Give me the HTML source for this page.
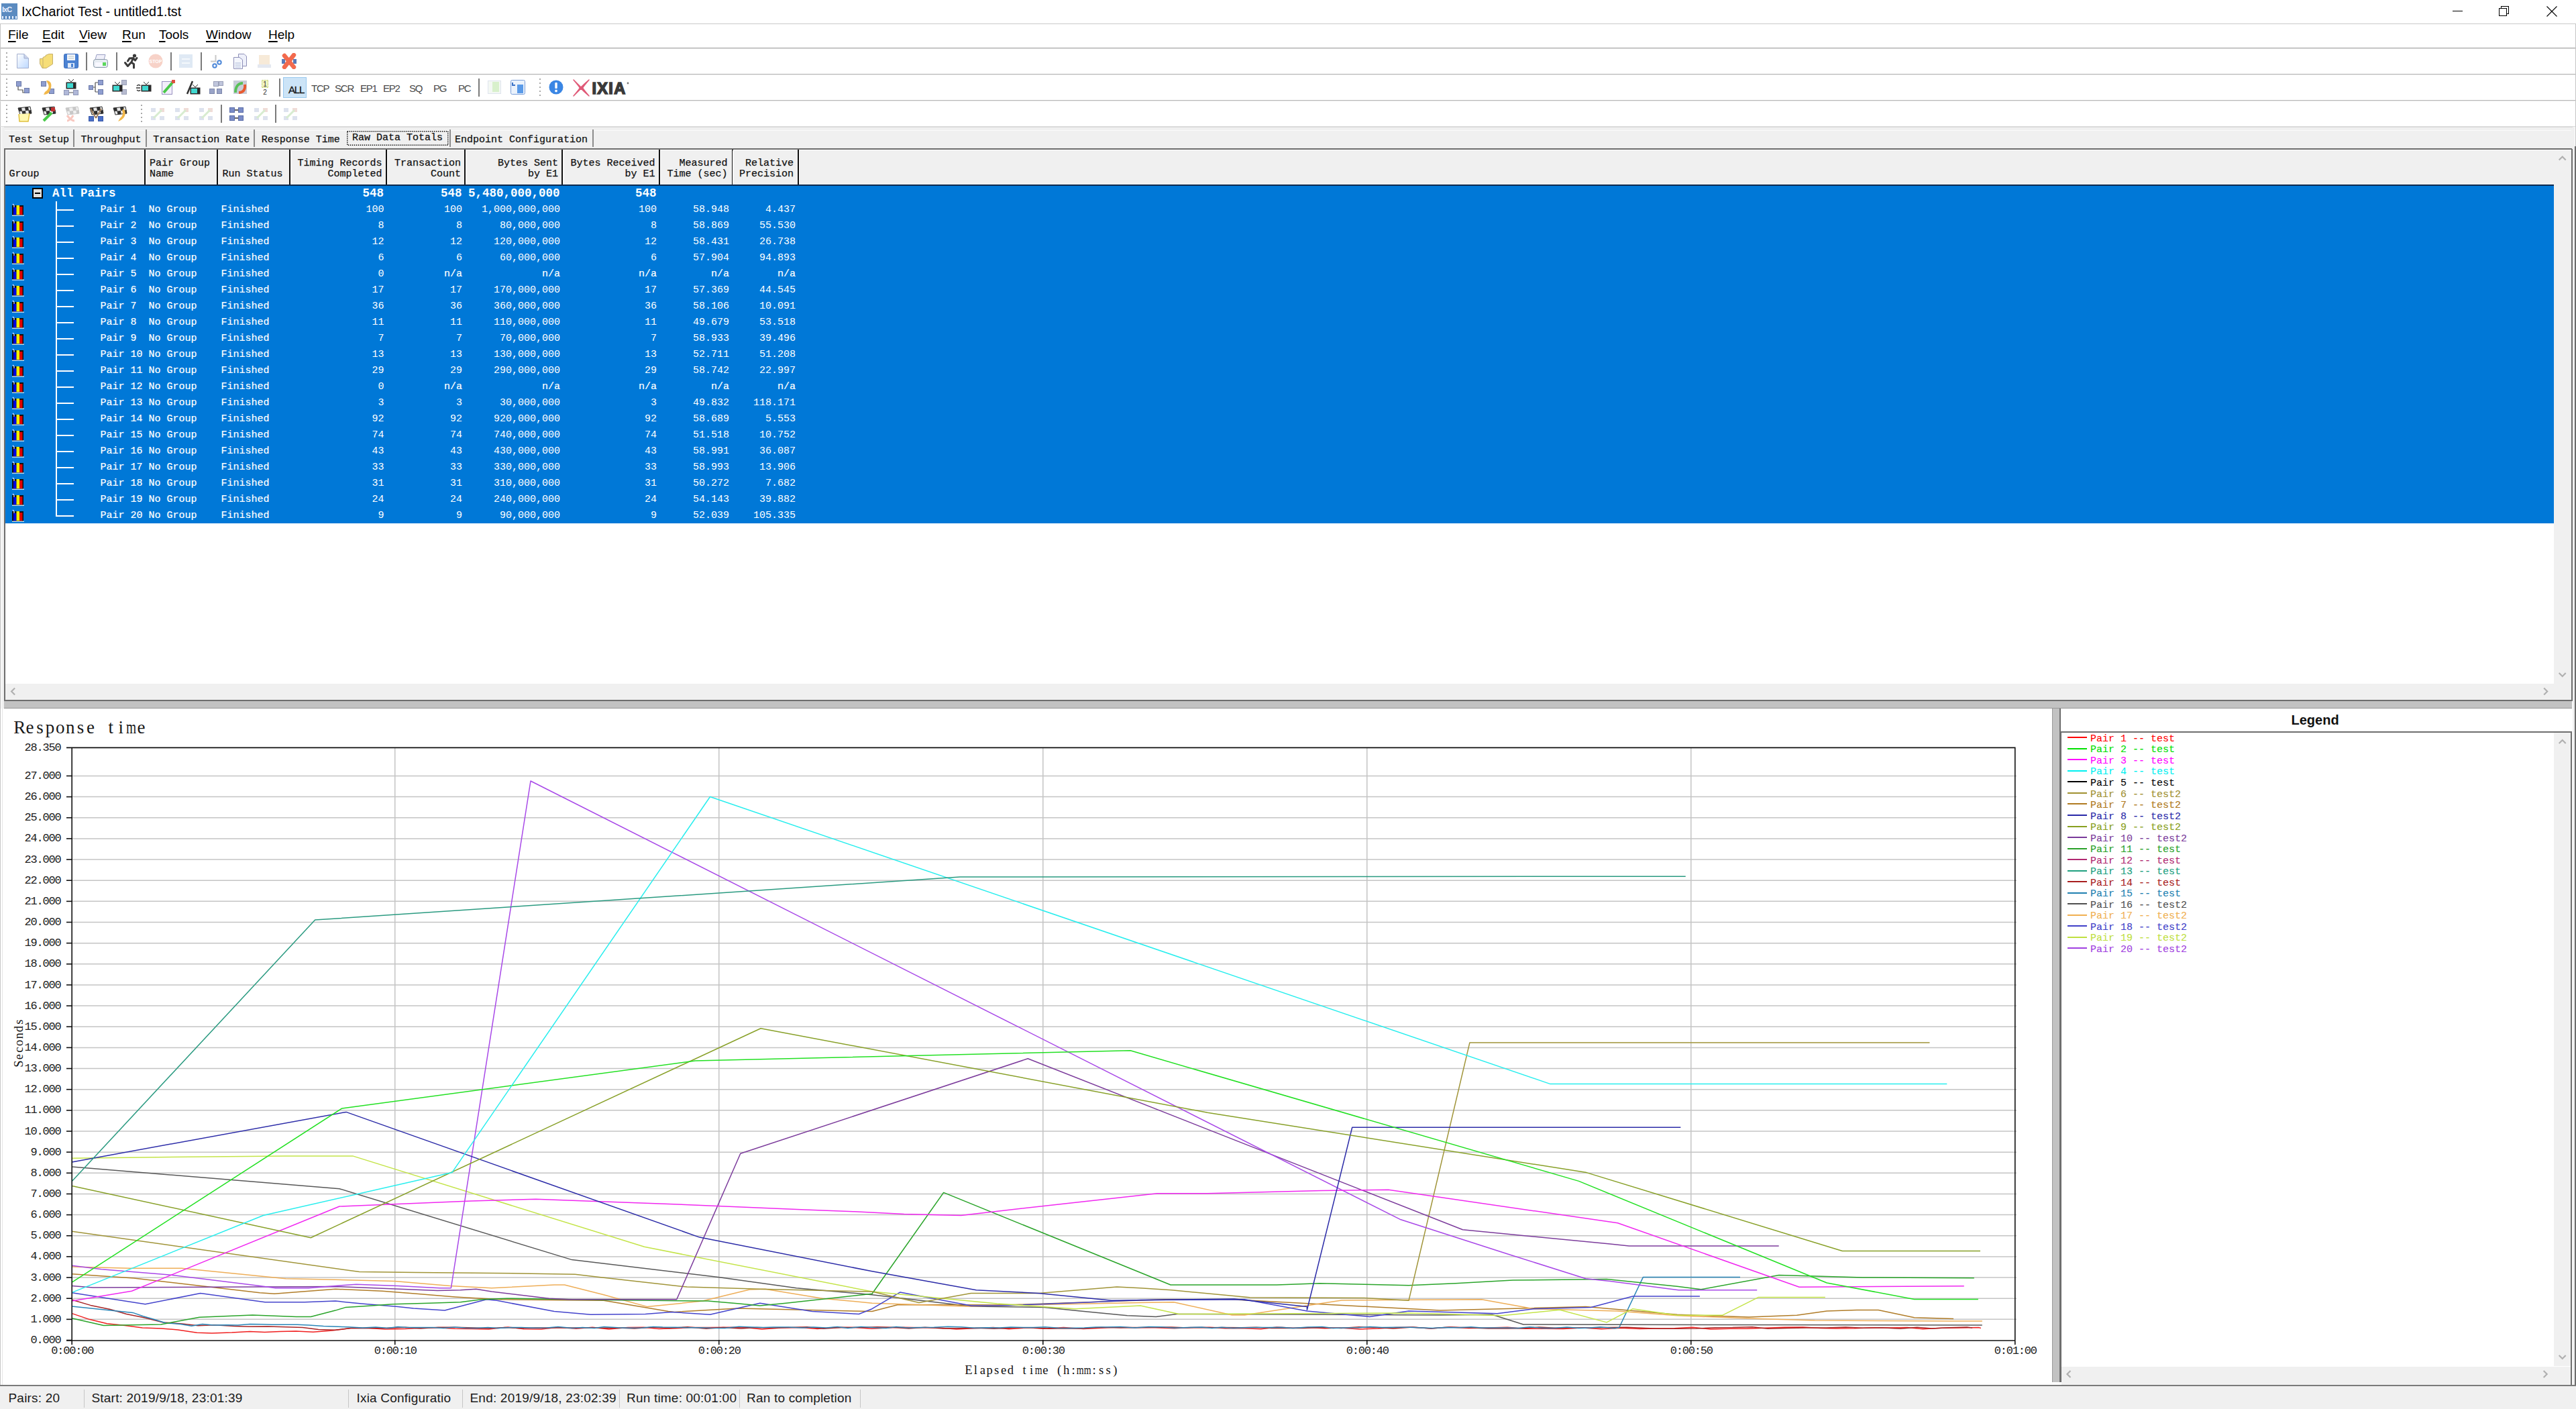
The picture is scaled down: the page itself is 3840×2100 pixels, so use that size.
<!DOCTYPE html><html><head><meta charset="utf-8"><title>IxChariot Test</title><style>

*{margin:0;padding:0;box-sizing:border-box}
html,body{width:3840px;height:2100px;overflow:hidden;background:#fff}
body{position:relative;font-family:"Liberation Sans",sans-serif;color:#000}
.a{position:absolute}
.t{position:absolute;white-space:pre;line-height:1}
.mono{font-family:"Liberation Mono",monospace}
.mb{font-family:"Liberation Mono",monospace;font-weight:bold}

</style></head><body>
<div class="a" style="left:2px;top:5px;width:24px;height:24px;background:#5b8bc0"></div>
<div class="t" style="left:3px;top:8px;font:bold 11px 'Liberation Sans', sans-serif;color:#e8f0ff;letter-spacing:-1px">IxC</div>
<div class="a" style="left:3px;top:24px;width:22px;height:4px;background:repeating-linear-gradient(90deg,#e8f0ff 0 2px,#5b8bc0 2px 5px)"></div>
<div class="t" style="left:32px;top:6px;font:19.7px 'Liberation Sans', sans-serif;color:#000">IxChariot Test - untitled1.tst</div>
<div class="a" style="left:3656px;top:16px;width:15px;height:1px;background:#000"></div>
<div class="a" style="left:3728px;top:9px;width:12px;height:12px;border:1px solid #000"></div>
<div class="a" style="left:3725px;top:12px;width:12px;height:12px;border:1px solid #000;background:#fff"></div>
<svg class="a" style="left:3795px;top:8px" width="18" height="18"><path d="M1.5 1.5L16.5 16.5M16.5 1.5L1.5 16.5" stroke="#000" stroke-width="1.1"/></svg>
<div class="a" style="left:0px;top:35px;width:3840px;height:1px;background:#c9c9c9"></div>
<div class="t" style="left:12px;top:41px;font:19px 'Liberation Sans', sans-serif"><u style="text-decoration-thickness:2px;text-underline-offset:3px">F</u>ile</div>
<div class="t" style="left:63px;top:41px;font:19px 'Liberation Sans', sans-serif"><u style="text-decoration-thickness:2px;text-underline-offset:3px">E</u>dit</div>
<div class="t" style="left:118px;top:41px;font:19px 'Liberation Sans', sans-serif"><u style="text-decoration-thickness:2px;text-underline-offset:3px">V</u>iew</div>
<div class="t" style="left:182px;top:41px;font:19px 'Liberation Sans', sans-serif"><u style="text-decoration-thickness:2px;text-underline-offset:3px">R</u>un</div>
<div class="t" style="left:237px;top:41px;font:19px 'Liberation Sans', sans-serif"><u style="text-decoration-thickness:2px;text-underline-offset:3px">T</u>ools</div>
<div class="t" style="left:307px;top:41px;font:19px 'Liberation Sans', sans-serif"><u style="text-decoration-thickness:2px;text-underline-offset:3px">W</u>indow</div>
<div class="t" style="left:400px;top:41px;font:19px 'Liberation Sans', sans-serif"><u style="text-decoration-thickness:2px;text-underline-offset:3px">H</u>elp</div>
<div class="a" style="left:0px;top:71px;width:3840px;height:1px;background:#a9a9a9"></div>
<div class="a" style="left:0px;top:72px;width:3840px;height:1px;background:#e3e3e3"></div>
<div class="a" style="left:0px;top:35px;width:1px;height:2065px;background:#c6c6c6"></div>
<div class="a" style="left:0px;top:110px;width:3840px;height:1px;background:#b9b9b9"></div>
<div class="a" style="left:0px;top:111px;width:3840px;height:1px;background:#e8e8e8"></div>
<div class="a" style="left:0px;top:149px;width:3840px;height:1px;background:#b9b9b9"></div>
<div class="a" style="left:0px;top:150px;width:3840px;height:1px;background:#e8e8e8"></div>
<div class="a" style="left:0px;top:188px;width:3840px;height:1px;background:#dcdcdc"></div>
<div class="a" style="left:8.5px;top:78px;width:2px;height:30px;background:repeating-linear-gradient(180deg,#a8a8a8 0 2px,transparent 2px 6px)"></div>
<div class="a" style="left:8.5px;top:117px;width:2px;height:30px;background:repeating-linear-gradient(180deg,#a8a8a8 0 2px,transparent 2px 6px)"></div>
<div class="a" style="left:8.5px;top:156px;width:2px;height:30px;background:repeating-linear-gradient(180deg,#a8a8a8 0 2px,transparent 2px 6px)"></div>
<div class="a" style="left:209.5px;top:156px;width:2px;height:30px;background:repeating-linear-gradient(180deg,#a8a8a8 0 2px,transparent 2px 6px)"></div>
<div class="a" style="left:803.5px;top:117px;width:2px;height:30px;background:repeating-linear-gradient(180deg,#a8a8a8 0 2px,transparent 2px 6px)"></div>
<div class="a" style="left:128px;top:78px;width:2px;height:27px;background:#7a7a7a"></div>
<div class="a" style="left:173px;top:78px;width:2px;height:27px;background:#7a7a7a"></div>
<div class="a" style="left:254px;top:78px;width:2px;height:27px;background:#7a7a7a"></div>
<div class="a" style="left:299px;top:78px;width:2px;height:27px;background:#7a7a7a"></div>
<div class="a" style="left:416px;top:117px;width:2px;height:27px;background:#7a7a7a"></div>
<div class="a" style="left:713px;top:117px;width:2px;height:27px;background:#7a7a7a"></div>
<div class="a" style="left:329px;top:156px;width:2px;height:27px;background:#7a7a7a"></div>
<div class="a" style="left:410px;top:156px;width:2px;height:27px;background:#7a7a7a"></div>
<svg class="a" style="left:22px;top:79px;opacity:1.0" width="24" height="24" viewBox="0 0 24 24"><defs><linearGradient id="gd" x1="0" y1="0" x2="1" y2="1"><stop offset="0" stop-color="#fff"/><stop offset="1" stop-color="#bcd8ff"/></linearGradient></defs><path d="M3.5 1.5H14L20.5 8V22.5H3.5Z" fill="url(#gd)" stroke="#a3afcf"/><path d="M14 1.5V8H20.5" fill="#c8d2ea" stroke="#a3afcf"/></svg>
<svg class="a" style="left:58px;top:79px;opacity:1.0" width="24" height="24" viewBox="0 0 24 24"><path d="M1.5 8.5H6V6.5L10 5V3.5L15 1.5H20.5V16.5L11 22.5H5L1.5 16Z" fill="#f6de78" stroke="#c6b06a"/><path d="M6 8.5V22" stroke="#c6b06a" fill="none"/></svg>
<svg class="a" style="left:94px;top:79px;opacity:1.0" width="24" height="24" viewBox="0 0 24 24"><rect x="1.5" y="1.5" width="21" height="21" rx="2" fill="#4b82d2" stroke="#3b6cbc"/><rect x="6" y="2" width="12" height="9" fill="#f4f6fa"/><path d="M8 5H16M8 8H16" stroke="#b8c4c0"/><rect x="7" y="15" width="10" height="7" fill="#dfeaf8"/><rect x="12" y="16" width="3" height="5" fill="#4b82d2"/></svg>
<svg class="a" style="left:138px;top:79px;opacity:1.0" width="24" height="24" viewBox="0 0 24 24"><path d="M6 2.5H19L17 10H4Z" fill="#f0f0fa" stroke="#9aa0c4"/><rect x="1.5" y="9.5" width="21" height="12" rx="3" fill="#e6ecf2" stroke="#8a98a8"/><rect x="4" y="14" width="11" height="6" fill="#f8f8ff"/><rect x="15" y="14" width="5" height="5" fill="#5cd85c"/></svg>
<svg class="a" style="left:184px;top:79px;opacity:1.0" width="24" height="24" viewBox="0 0 24 24"><circle cx="16.5" cy="4" r="2.6" fill="#3a3a3a"/><path d="M2.5 14.5L6.5 19.5L12 13.5M12 13.5L14.5 7.5M14.5 7.5L9 8L6.5 12M14.5 7.5L17.5 11L20 7.5M12.5 14.5L15.5 16.5L15.5 22" stroke="#3a3a3a" stroke-width="3" fill="none" stroke-linejoin="round" stroke-linecap="round"/></svg>
<svg class="a" style="left:220px;top:79px;opacity:1.0" width="24" height="24" viewBox="0 0 24 24"><circle cx="12" cy="12" r="10.5" fill="#f7d2c8"/><text x="12" y="15" font-size="7" font-family="Liberation Sans" font-weight="bold" text-anchor="middle" fill="#fff">STOP</text></svg>
<svg class="a" style="left:265px;top:79px;opacity:1.0" width="24" height="24" viewBox="0 0 24 24"><rect x="2" y="2" width="20" height="20" fill="#dfe9f4"/><path d="M6 9H18M6 15H18" stroke="#f4f8fc" stroke-width="2"/></svg>
<svg class="a" style="left:310px;top:79px;opacity:1.0" width="24" height="24" viewBox="0 0 24 24"><path d="M4 12.5H11.5V3" stroke="#c8c8c8" stroke-width="2" fill="none"/><circle cx="10" cy="19" r="2.7" fill="none" stroke="#4e88d8" stroke-width="2"/><circle cx="17" cy="14" r="2.7" fill="none" stroke="#4e88d8" stroke-width="2"/></svg>
<svg class="a" style="left:346px;top:79px;opacity:1.0" width="24" height="24" viewBox="0 0 24 24"><path d="M9.5 1.5H18L21.5 5V19.5H9.5Z" fill="#eef0fa" stroke="#8e90b8"/><path d="M2.5 6.5H11L15.5 10V23.5H2.5Z" fill="#f4f6fc" stroke="#8e90b8"/><path d="M4.5 15H13M4.5 18H13M4.5 21H13" stroke="#aab8d8"/></svg>
<svg class="a" style="left:382px;top:79px;opacity:1.0" width="24" height="24" viewBox="0 0 24 24"><rect x="4" y="3" width="16" height="19" fill="#f7ead8"/><rect x="2" y="17" width="20" height="5" fill="#e4e8f0"/></svg>
<svg class="a" style="left:419px;top:79px;opacity:1.0" width="24" height="24" viewBox="0 0 24 24"><rect x="1" y="9" width="5" height="7" fill="#5a7ab8"/><rect x="18" y="9" width="5" height="7" fill="#5a7ab8"/><path d="M5 4L19 21M19 3L5 21" stroke="#f26a4e" stroke-width="6.5" stroke-linecap="round"/></svg>
<svg class="a" style="left:22px;top:118px;opacity:1.0" width="24" height="24" viewBox="0 0 24 24"><rect x="2.5" y="3.5" width="7" height="7" fill="#8f9ed0" stroke="#6c7aa8"/><rect x="14.5" y="13.5" width="7" height="7" fill="#8f9ed0" stroke="#6c7aa8"/><path d="M5 11V16H12V20H14" stroke="#505050" fill="none" stroke-width="1.2"/></svg>
<svg class="a" style="left:59px;top:118px;opacity:1.0" width="24" height="24" viewBox="0 0 24 24"><rect x="2.5" y="3.5" width="7" height="7" fill="#8f9ed0" stroke="#6c7aa8"/><rect x="14.5" y="14.5" width="7" height="7" fill="#8f9ed0" stroke="#6c7aa8"/><path d="M10 2C18 2 20 10 14 20C11 23 6 23 6 23L8 19C12 17 15 12 13 8Z" fill="#f2b84a"/></svg>
<svg class="a" style="left:94px;top:118px;opacity:1.0" width="24" height="24" viewBox="0 0 24 24"><path d="M8 0L12 4L16 0" stroke="#303030" fill="none"/><rect x="4.5" y="4.5" width="15" height="10" fill="#2a2a2a"/><rect x="6" y="6" width="9" height="7" fill="#40d8d0"/><rect x="1.5" y="16.5" width="7" height="7" fill="#b0b8d8" stroke="#9098b8"/><rect x="15.5" y="16.5" width="7" height="7" fill="#b0b8d8" stroke="#9098b8"/><path d="M9 20H15" stroke="#505050"/></svg>
<svg class="a" style="left:131px;top:118px;opacity:1.0" width="24" height="24" viewBox="0 0 24 24"><rect x="1.5" y="9.5" width="6" height="6" fill="#8f9ed0" stroke="#6c7aa8"/><rect x="15.5" y="1.5" width="7" height="7" fill="#8f9ed0" stroke="#6c7aa8"/><rect x="15.5" y="15.5" width="7" height="7" fill="#8f9ed0" stroke="#6c7aa8"/><path d="M8 12H11M11 5V19M11 5H15M11 19H15" stroke="#505050" fill="none" stroke-width="1.2"/></svg>
<svg class="a" style="left:166px;top:118px;opacity:1.0" width="24" height="24" viewBox="0 0 24 24"><rect x="15.5" y="1.5" width="7" height="7" fill="#b8bcd0" stroke="#9aa0b8"/><rect x="15.5" y="15.5" width="7" height="7" fill="#b8bcd0" stroke="#9aa0b8"/><path d="M5 4L9 8L13 4" stroke="#303030" fill="none"/><rect x="1.5" y="8.5" width="15" height="10" fill="#2a2a2a"/><rect x="3" y="10" width="9" height="7" fill="#40d8d0"/></svg>
<svg class="a" style="left:202px;top:118px;opacity:1.0" width="24" height="24" viewBox="0 0 24 24"><path d="M12 4L16 8L20 4" stroke="#303030" fill="none"/><rect x="8.5" y="8.5" width="15" height="10" fill="#2a2a2a"/><rect x="10" y="10" width="9" height="7" fill="#40d8d0"/><path d="M2 10C4 8 6 8 7 10M1 13H7M2 16C4 18 6 18 7 16" stroke="#303030" fill="none" stroke-width="1.3"/></svg>
<svg class="a" style="left:238px;top:118px;opacity:1.0" width="24" height="24" viewBox="0 0 24 24"><rect x="3.5" y="3.5" width="15" height="19" fill="#f2eefa" stroke="#9890c0"/><path d="M6 20L20 4" stroke="#48c848" stroke-width="4"/><rect x="18" y="1" width="5" height="5" fill="#e05040"/></svg>
<svg class="a" style="left:275px;top:118px;opacity:1.0" width="24" height="24" viewBox="0 0 24 24"><path d="M4 22L12 3" stroke="#303030" stroke-width="2.5"/><path d="M12 8L16 12L20 8" stroke="#303030" fill="none"/><rect x="8.5" y="12.5" width="15" height="10" fill="#2a2a2a"/><rect x="10" y="14" width="9" height="7" fill="#40d8d0"/></svg>
<svg class="a" style="left:310px;top:118px;opacity:1.0" width="24" height="24" viewBox="0 0 24 24"><rect x="2.5" y="14.5" width="7" height="7" fill="#9aa4c8" stroke="#7c86aa"/><rect x="13.5" y="14.5" width="7" height="7" fill="#9aa4c8" stroke="#7c86aa"/><rect x="8.5" y="3.5" width="7" height="7" fill="#c0c6dc" stroke="#9aa0b8"/><rect x="16.5" y="3.5" width="6" height="6" fill="#c0c6dc" stroke="#9aa0b8"/></svg>
<svg class="a" style="left:346px;top:118px;opacity:1.0" width="24" height="24" viewBox="0 0 24 24"><rect x="2" y="2" width="20" height="20" fill="#c8ccd8"/><path d="M5 20C5 10 10 6 16 6" stroke="#58c058" stroke-width="4" fill="none"/><path d="M19 8C20 16 16 20 10 20" stroke="#e85a30" stroke-width="4" fill="none"/></svg>
<svg class="a" style="left:383px;top:118px;opacity:1.0" width="24" height="24" viewBox="0 0 24 24"><rect x="7.5" y="1.5" width="9" height="11" fill="#f2f6c0" stroke="#b8c860" stroke-dasharray="1.5 1"/><text x="12" y="11" font-size="10" font-family="Liberation Sans" text-anchor="middle" fill="#303030">1</text><text x="12" y="23" font-size="10" font-family="Liberation Sans" text-anchor="middle" fill="#303030">2</text></svg>
<div class="a" style="left:422px;top:115px;width:35px;height:31px;background:#cce4f7;border:1px solid #99c9ef"></div>
<div class="t" style="left:430px;top:124.5px;font:15px 'Liberation Sans', sans-serif;color:#111;letter-spacing:-1.2px;-webkit-text-stroke:0.3px #111">ALL</div>
<div class="t" style="left:464px;top:123px;font:15px 'Liberation Sans', sans-serif;color:#4a4a4a;letter-spacing:-1.2px">TCP</div>
<div class="t" style="left:499px;top:123px;font:15px 'Liberation Sans', sans-serif;color:#4a4a4a;letter-spacing:-1.2px">SCR</div>
<div class="t" style="left:537px;top:123px;font:15px 'Liberation Sans', sans-serif;color:#4a4a4a;letter-spacing:-1.2px">EP1</div>
<div class="t" style="left:571px;top:123px;font:15px 'Liberation Sans', sans-serif;color:#4a4a4a;letter-spacing:-1.2px">EP2</div>
<div class="t" style="left:610px;top:123px;font:15px 'Liberation Sans', sans-serif;color:#4a4a4a;letter-spacing:-1.2px">SQ</div>
<div class="t" style="left:646px;top:123px;font:15px 'Liberation Sans', sans-serif;color:#4a4a4a;letter-spacing:-1.2px">PG</div>
<div class="t" style="left:683px;top:123px;font:15px 'Liberation Sans', sans-serif;color:#4a4a4a;letter-spacing:-1.2px">PC</div>
<svg class="a" style="left:725px;top:118px;opacity:1.0" width="24" height="24" viewBox="0 0 24 24"><rect x="2.5" y="2.5" width="19" height="19" fill="#f4f8f4" stroke="#dfe4ee"/><rect x="9" y="4" width="10" height="15" fill="#d8f0cc"/></svg>
<svg class="a" style="left:760px;top:118px;opacity:1.0" width="24" height="24" viewBox="0 0 24 24"><rect x="1.5" y="1.5" width="21" height="21" rx="2" fill="#eaf2fc" stroke="#7a9ed8"/><path d="M4 5V9H8" stroke="#3a72c8" stroke-width="2" fill="none"/><rect x="11" y="8" width="9" height="13" fill="#5a9ae8"/></svg>
<svg class="a" style="left:817px;top:118px;opacity:1.0" width="24" height="24" viewBox="0 0 24 24"><circle cx="12" cy="12" r="10.5" fill="#3a86e4"/><rect x="10.3" y="5" width="3.4" height="9" rx="1" fill="#fff"/><rect x="10.3" y="15.8" width="3.4" height="3.4" rx="1" fill="#fff"/></svg>
<svg class="a" style="left:854px;top:118px" width="84" height="26" viewBox="0 0 84 26"><path d="M1 1C6 6 9 9 12 12C15 9 18 6 24 1C20 6 17 9 14.5 13C17 17 20 20 24 25C18 20 15 17 12 14C9 17 6 20 1 25C5 20 8 17 10.5 13C8 9 5 6 1 1Z" fill="#e05a78" stroke="#e05a78" stroke-width="1.5" stroke-linejoin="round"/><text x="28.5" y="21.5" font-family="Liberation Sans" font-weight="bold" font-size="23.5" fill="#3a3a3a" stroke="#3a3a3a" stroke-width="1.6" letter-spacing="1.3">IXIA</text><circle cx="82" cy="6" r="1.4" fill="#777"/></svg>
<svg class="a" style="left:24px;top:158px;opacity:1.0" width="24" height="24" viewBox="0 0 24 24"><path d="M3 3L21 1L23 11L6 13Z" fill="#e8e8e8" stroke="#303030"/><path d="M3 3L8 2.5L9 7.5L4.5 8ZM13 2L18 1.5L19 6.5L14 7ZM8.5 7.5L14 7L14.5 12L9.5 12.5ZM18.5 6.5L22.5 6L23 11L19 11.5Z" fill="#303030"/><path d="M4 12L5 23H18L20 11" fill="#fff8b0" stroke="#e0c040" stroke-width="1.5"/></svg>
<svg class="a" style="left:60px;top:158px;opacity:1.0" width="24" height="24" viewBox="0 0 24 24"><path d="M3 3L21 1L23 11L6 13Z" fill="#e8e8e8" stroke="#303030"/><path d="M3 3L8 2.5L9 7.5L4.5 8ZM13 2L18 1.5L19 6.5L14 7ZM8.5 7.5L14 7L14.5 12L9.5 12.5ZM18.5 6.5L22.5 6L23 11L19 11.5Z" fill="#303030"/><rect x="16" y="2" width="6" height="6" fill="#c03030"/><path d="M5 22L17 10" stroke="#48c848" stroke-width="4"/></svg>
<svg class="a" style="left:95px;top:158px;opacity:1.0" width="24" height="24" viewBox="0 0 24 24"><path d="M3 3L21 1L23 11L6 13Z" fill="#f0f0f0" stroke="#c8c8c8"/><path d="M3 3L8 2.5L9 7.5L4.5 8ZM13 2L18 1.5L19 6.5L14 7ZM8.5 7.5L14 7L14.5 12L9.5 12.5ZM18.5 6.5L22.5 6L23 11L19 11.5Z" fill="#c8c8c8"/><path d="M5 14C8 18 12 22 16 22M14 14C12 18 8 22 5 22" stroke="#f8c8c0" stroke-width="3" fill="none"/></svg>
<svg class="a" style="left:131px;top:158px;opacity:1.0" width="24" height="24" viewBox="0 0 24 24"><path d="M3 3L21 1L23 11L6 13Z" fill="#e8e8e8" stroke="#303030"/><path d="M3 3L8 2.5L9 7.5L4.5 8ZM13 2L18 1.5L19 6.5L14 7ZM8.5 7.5L14 7L14.5 12L9.5 12.5ZM18.5 6.5L22.5 6L23 11L19 11.5Z" fill="#303030"/><path d="M4 4L12 18M20 4L12 18" stroke="#a08060" stroke-width="2"/><rect x="1.5" y="15.5" width="7" height="7" fill="#4a70c8" stroke="#3858a8"/><rect x="15.5" y="15.5" width="7" height="7" fill="#4a70c8" stroke="#3858a8"/></svg>
<svg class="a" style="left:166px;top:158px;opacity:1.0" width="24" height="24" viewBox="0 0 24 24"><path d="M3 3L21 1L23 11L6 13Z" fill="#e8e8e8" stroke="#303030"/><path d="M3 3L8 2.5L9 7.5L4.5 8ZM13 2L18 1.5L19 6.5L14 7ZM8.5 7.5L14 7L14.5 12L9.5 12.5ZM18.5 6.5L22.5 6L23 11L19 11.5Z" fill="#303030"/><path d="M18 4C24 10 20 20 10 23L13 18C17 15 18 10 16 7Z" fill="#f2b84a"/></svg>
<svg class="a" style="left:223px;top:158px;opacity:1.0" width="24" height="24" viewBox="0 0 24 24"><rect x="2" y="3" width="7" height="6" fill="#dde2ee"/><rect x="15" y="3" width="7" height="6" fill="#f0dcd8"/><rect x="2" y="15" width="7" height="6" fill="#dde2ee"/><rect x="15" y="15" width="7" height="6" fill="#dde2ee"/><path d="M6 18L18 6" stroke="#d8ecd0" stroke-width="3"/></svg>
<svg class="a" style="left:259px;top:158px;opacity:1.0" width="24" height="24" viewBox="0 0 24 24"><rect x="2" y="3" width="7" height="6" fill="#dde2ee"/><rect x="15" y="3" width="7" height="6" fill="#f0dcd8"/><rect x="2" y="15" width="7" height="6" fill="#dde2ee"/><rect x="15" y="15" width="7" height="6" fill="#dde2ee"/><path d="M6 18L18 6" stroke="#d8ecd0" stroke-width="3"/></svg>
<svg class="a" style="left:295px;top:158px;opacity:1.0" width="24" height="24" viewBox="0 0 24 24"><rect x="2" y="3" width="7" height="6" fill="#dde2ee"/><rect x="15" y="3" width="7" height="6" fill="#f0dcd8"/><rect x="2" y="15" width="7" height="6" fill="#dde2ee"/><rect x="15" y="15" width="7" height="6" fill="#dde2ee"/><path d="M6 18L18 6" stroke="#d8ecd0" stroke-width="3"/></svg>
<svg class="a" style="left:377px;top:158px;opacity:1.0" width="24" height="24" viewBox="0 0 24 24"><rect x="2" y="3" width="7" height="6" fill="#dde2ee"/><rect x="15" y="3" width="7" height="6" fill="#f0dcd8"/><rect x="2" y="15" width="7" height="6" fill="#dde2ee"/><rect x="15" y="15" width="7" height="6" fill="#dde2ee"/><path d="M6 18L18 6" stroke="#d8ecd0" stroke-width="3"/></svg>
<svg class="a" style="left:421px;top:158px;opacity:1.0" width="24" height="24" viewBox="0 0 24 24"><rect x="2" y="3" width="7" height="6" fill="#dde2ee"/><rect x="15" y="3" width="7" height="6" fill="#f0dcd8"/><rect x="2" y="15" width="7" height="6" fill="#dde2ee"/><rect x="15" y="15" width="7" height="6" fill="#dde2ee"/><path d="M6 18L18 6" stroke="#d8ecd0" stroke-width="3"/></svg>
<svg class="a" style="left:340px;top:158px;opacity:1.0" width="24" height="24" viewBox="0 0 24 24"><rect x="2.5" y="2.5" width="7" height="7" fill="#7a8cc8" stroke="#5a6ca8"/><rect x="15.5" y="2.5" width="7" height="7" fill="#7a8cc8" stroke="#5a6ca8"/><rect x="2.5" y="14.5" width="7" height="7" fill="#7a8cc8" stroke="#5a6ca8"/><rect x="15.5" y="14.5" width="7" height="7" fill="#7a8cc8" stroke="#5a6ca8"/><path d="M10 6H15M10 18H15" stroke="#303030" stroke-width="1.5"/></svg>
<div class="a" style="left:1px;top:189px;width:3837px;height:33px;background:#f0f0f0"></div>
<div class="a" style="left:1px;top:189px;width:3837px;height:1px;background:#d9d9d9"></div>
<div class="a" style="left:7px;top:194px;width:3826px;height:1px;background:#fafafa"></div>
<div class="a" style="left:1px;top:189px;width:5px;height:1875px;background:#f0f0f0"></div>
<div class="a" style="left:2px;top:189px;width:1px;height:1875px;background:#fbfbfb"></div>
<div class="t" style="left:13.0px;top:199.5px;font:15px 'Liberation Mono', monospace;color:#111;-webkit-text-stroke:0.25px #111">Test Setup</div>
<div class="t" style="left:120.5px;top:199.5px;font:15px 'Liberation Mono', monospace;color:#111;-webkit-text-stroke:0.25px #111">Throughput</div>
<div class="t" style="left:228.2px;top:199.5px;font:15px 'Liberation Mono', monospace;color:#111;-webkit-text-stroke:0.25px #111">Transaction Rate</div>
<div class="t" style="left:389.7px;top:199.5px;font:15px 'Liberation Mono', monospace;color:#111;-webkit-text-stroke:0.25px #111">Response Time</div>
<div class="t" style="left:525.1px;top:197px;font:15px 'Liberation Mono', monospace;color:#111;-webkit-text-stroke:0.25px #111">Raw Data Totals</div>
<div class="t" style="left:678.1px;top:199.5px;font:15px 'Liberation Mono', monospace;color:#111;-webkit-text-stroke:0.25px #111">Endpoint Configuration</div>
<div class="a" style="left:109px;top:193px;width:2px;height:26px;background:#8c8c8c"></div>
<div class="a" style="left:217px;top:193px;width:2px;height:26px;background:#8c8c8c"></div>
<div class="a" style="left:378px;top:193px;width:2px;height:26px;background:#8c8c8c"></div>
<div class="a" style="left:670px;top:193px;width:2px;height:26px;background:#8c8c8c"></div>
<div class="a" style="left:883px;top:193px;width:2px;height:26px;background:#8c8c8c"></div>
<svg class="a" style="left:517px;top:195px" width="152" height="23"><rect x="0.75" y="0.75" width="150" height="20.5" fill="none" stroke="#000" stroke-width="1.4" stroke-dasharray="1.4 1.6"/></svg>
<div class="a" style="left:6px;top:222px;width:3828px;height:823px;background:#fff"></div>
<div class="a" style="left:8px;top:223px;width:3799px;height:53px;background:#f0f0f0"></div>
<div class="a" style="left:8px;top:223px;width:3799px;height:1px;background:#fff"></div>
<div class="a" style="left:6px;top:221px;width:3828px;height:2px;background:#6e6e6e"></div>
<div class="a" style="left:6px;top:222px;width:2px;height:823px;background:#6e6e6e"></div>
<div class="a" style="left:6px;top:1043px;width:3828px;height:2px;background:#6e6e6e"></div>
<div class="a" style="left:3833px;top:222px;width:2px;height:823px;background:#6e6e6e"></div>
<div class="a" style="left:8px;top:224px;width:1px;height:52px;background:#fff"></div>
<div class="a" style="left:215px;top:223px;width:2px;height:53px;background:#111"></div>
<div class="a" style="left:218px;top:224px;width:1px;height:52px;background:#fff"></div>
<div class="a" style="left:323px;top:223px;width:2px;height:53px;background:#111"></div>
<div class="a" style="left:325px;top:224px;width:1px;height:52px;background:#fff"></div>
<div class="a" style="left:431px;top:223px;width:2px;height:53px;background:#111"></div>
<div class="a" style="left:434px;top:224px;width:1px;height:52px;background:#fff"></div>
<div class="a" style="left:575px;top:223px;width:2px;height:53px;background:#111"></div>
<div class="a" style="left:577px;top:224px;width:1px;height:52px;background:#fff"></div>
<div class="a" style="left:692px;top:223px;width:2px;height:53px;background:#111"></div>
<div class="a" style="left:694px;top:224px;width:1px;height:52px;background:#fff"></div>
<div class="a" style="left:837px;top:223px;width:2px;height:53px;background:#111"></div>
<div class="a" style="left:840px;top:224px;width:1px;height:52px;background:#fff"></div>
<div class="a" style="left:982px;top:223px;width:2px;height:53px;background:#111"></div>
<div class="a" style="left:984px;top:224px;width:1px;height:52px;background:#fff"></div>
<div class="a" style="left:1091px;top:223px;width:2px;height:53px;background:#111"></div>
<div class="a" style="left:1092px;top:224px;width:1px;height:52px;background:#fff"></div>
<div class="a" style="left:1189px;top:223px;width:2px;height:53px;background:#111"></div>
<div class="a" style="left:1191px;top:224px;width:1px;height:52px;background:#fff"></div>
<div class="a" style="left:8px;top:275px;width:3799px;height:2px;background:#0a2a50"></div>
<div class="a" style="left:8px;top:277px;width:3799px;height:503px;background:#0078d7"></div>
<div class="t" style="left:13.5px;top:250.5px;font:15px 'Liberation Mono', monospace;color:#111;-webkit-text-stroke:0.25px #111">Group</div>
<div class="t" style="left:223.1px;top:234.5px;font:15px 'Liberation Mono', monospace;color:#111;-webkit-text-stroke:0.25px #111">Pair Group</div>
<div class="t" style="left:223.1px;top:250.5px;font:15px 'Liberation Mono', monospace;color:#111;-webkit-text-stroke:0.25px #111">Name</div>
<div class="t" style="left:331.5px;top:250.5px;font:15px 'Liberation Mono', monospace;color:#111;-webkit-text-stroke:0.25px #111">Run Status</div>
<div class="t" style="right:3270.5px;top:234.5px;font:15px 'Liberation Mono', monospace;color:#111;-webkit-text-stroke:0.25px #111">Timing Records</div>
<div class="t" style="right:3270.5px;top:250.5px;font:15px 'Liberation Mono', monospace;color:#111;-webkit-text-stroke:0.25px #111">Completed</div>
<div class="t" style="right:3153px;top:234.5px;font:15px 'Liberation Mono', monospace;color:#111;-webkit-text-stroke:0.25px #111">Transaction</div>
<div class="t" style="right:3153px;top:250.5px;font:15px 'Liberation Mono', monospace;color:#111;-webkit-text-stroke:0.25px #111">Count</div>
<div class="t" style="right:3008px;top:234.5px;font:15px 'Liberation Mono', monospace;color:#111;-webkit-text-stroke:0.25px #111">Bytes Sent</div>
<div class="t" style="right:3008px;top:250.5px;font:15px 'Liberation Mono', monospace;color:#111;-webkit-text-stroke:0.25px #111">by E1</div>
<div class="t" style="right:2863.5px;top:234.5px;font:15px 'Liberation Mono', monospace;color:#111;-webkit-text-stroke:0.25px #111">Bytes Received</div>
<div class="t" style="right:2863.5px;top:250.5px;font:15px 'Liberation Mono', monospace;color:#111;-webkit-text-stroke:0.25px #111">by E1</div>
<div class="t" style="right:2755.5px;top:234.5px;font:15px 'Liberation Mono', monospace;color:#111;-webkit-text-stroke:0.25px #111">Measured</div>
<div class="t" style="right:2755.5px;top:250.5px;font:15px 'Liberation Mono', monospace;color:#111;-webkit-text-stroke:0.25px #111">Time (sec)</div>
<div class="t" style="right:2657px;top:234.5px;font:15px 'Liberation Mono', monospace;color:#111;-webkit-text-stroke:0.25px #111">Relative</div>
<div class="t" style="right:2657px;top:250.5px;font:15px 'Liberation Mono', monospace;color:#111;-webkit-text-stroke:0.25px #111">Precision</div>
<div class="t" style="left:78px;top:278.0px;font:bold 17.5px 'Liberation Mono', monospace;color:#fff">All Pairs</div>
<div class="t" style="right:3268.0px;top:278.0px;font:bold 17.5px 'Liberation Mono', monospace;color:#fff">548</div>
<div class="t" style="right:3151.5px;top:278.0px;font:bold 17.5px 'Liberation Mono', monospace;color:#fff">548</div>
<div class="t" style="right:3005.5px;top:278.0px;font:bold 17.5px 'Liberation Mono', monospace;color:#fff">5,480,000,000</div>
<div class="t" style="right:2861.5px;top:278.0px;font:bold 17.5px 'Liberation Mono', monospace;color:#fff">548</div>
<div class="t" style="left:149.5px;top:303.5px;font:15px 'Liberation Mono', monospace;color:#fff;-webkit-text-stroke:0.2px #fff">Pair 1</div>
<div class="t" style="left:221.5px;top:303.5px;font:15px 'Liberation Mono', monospace;color:#fff;-webkit-text-stroke:0.2px #fff">No Group</div>
<div class="t" style="left:329.5px;top:303.5px;font:15px 'Liberation Mono', monospace;color:#fff;-webkit-text-stroke:0.2px #fff">Finished</div>
<div class="t" style="right:3267.5px;top:303.5px;font:15px 'Liberation Mono', monospace;color:#fff">100</div>
<div class="t" style="right:3151px;top:303.5px;font:15px 'Liberation Mono', monospace;color:#fff">100</div>
<div class="t" style="right:3005px;top:303.5px;font:15px 'Liberation Mono', monospace;color:#fff">1,000,000,000</div>
<div class="t" style="right:2861px;top:303.5px;font:15px 'Liberation Mono', monospace;color:#fff">100</div>
<div class="t" style="right:2753px;top:303.5px;font:15px 'Liberation Mono', monospace;color:#fff">58.948</div>
<div class="t" style="right:2654px;top:303.5px;font:15px 'Liberation Mono', monospace;color:#fff">4.437</div>
<svg class="a" style="left:17px;top:303px" width="20" height="20" viewBox="0 0 20 20"><rect x="1" y="3" width="17" height="16" fill="#111"/><rect x="3" y="6" width="4.5" height="11" fill="#0000e0"/><rect x="7.5" y="3" width="4.5" height="14" fill="#f0f000"/><rect x="12" y="5" width="4.5" height="12" fill="#e00000"/><rect x="1" y="17.5" width="18" height="1.5" fill="#c0d8f0"/><path d="M2 1L4 3V6" stroke="#e0e0ff" stroke-width="1.2" fill="none"/></svg>
<div class="a" style="left:83px;top:312px;width:27px;height:2px;background:#fff"></div>
<div class="t" style="left:149.5px;top:327.5px;font:15px 'Liberation Mono', monospace;color:#fff;-webkit-text-stroke:0.2px #fff">Pair 2</div>
<div class="t" style="left:221.5px;top:327.5px;font:15px 'Liberation Mono', monospace;color:#fff;-webkit-text-stroke:0.2px #fff">No Group</div>
<div class="t" style="left:329.5px;top:327.5px;font:15px 'Liberation Mono', monospace;color:#fff;-webkit-text-stroke:0.2px #fff">Finished</div>
<div class="t" style="right:3267.5px;top:327.5px;font:15px 'Liberation Mono', monospace;color:#fff">8</div>
<div class="t" style="right:3151px;top:327.5px;font:15px 'Liberation Mono', monospace;color:#fff">8</div>
<div class="t" style="right:3005px;top:327.5px;font:15px 'Liberation Mono', monospace;color:#fff">80,000,000</div>
<div class="t" style="right:2861px;top:327.5px;font:15px 'Liberation Mono', monospace;color:#fff">8</div>
<div class="t" style="right:2753px;top:327.5px;font:15px 'Liberation Mono', monospace;color:#fff">58.869</div>
<div class="t" style="right:2654px;top:327.5px;font:15px 'Liberation Mono', monospace;color:#fff">55.530</div>
<svg class="a" style="left:17px;top:327px" width="20" height="20" viewBox="0 0 20 20"><rect x="1" y="3" width="17" height="16" fill="#111"/><rect x="3" y="6" width="4.5" height="11" fill="#0000e0"/><rect x="7.5" y="3" width="4.5" height="14" fill="#f0f000"/><rect x="12" y="5" width="4.5" height="12" fill="#e00000"/><rect x="1" y="17.5" width="18" height="1.5" fill="#c0d8f0"/><path d="M2 1L4 3V6" stroke="#e0e0ff" stroke-width="1.2" fill="none"/></svg>
<div class="a" style="left:83px;top:336px;width:27px;height:2px;background:#fff"></div>
<div class="t" style="left:149.5px;top:351.5px;font:15px 'Liberation Mono', monospace;color:#fff;-webkit-text-stroke:0.2px #fff">Pair 3</div>
<div class="t" style="left:221.5px;top:351.5px;font:15px 'Liberation Mono', monospace;color:#fff;-webkit-text-stroke:0.2px #fff">No Group</div>
<div class="t" style="left:329.5px;top:351.5px;font:15px 'Liberation Mono', monospace;color:#fff;-webkit-text-stroke:0.2px #fff">Finished</div>
<div class="t" style="right:3267.5px;top:351.5px;font:15px 'Liberation Mono', monospace;color:#fff">12</div>
<div class="t" style="right:3151px;top:351.5px;font:15px 'Liberation Mono', monospace;color:#fff">12</div>
<div class="t" style="right:3005px;top:351.5px;font:15px 'Liberation Mono', monospace;color:#fff">120,000,000</div>
<div class="t" style="right:2861px;top:351.5px;font:15px 'Liberation Mono', monospace;color:#fff">12</div>
<div class="t" style="right:2753px;top:351.5px;font:15px 'Liberation Mono', monospace;color:#fff">58.431</div>
<div class="t" style="right:2654px;top:351.5px;font:15px 'Liberation Mono', monospace;color:#fff">26.738</div>
<svg class="a" style="left:17px;top:351px" width="20" height="20" viewBox="0 0 20 20"><rect x="1" y="3" width="17" height="16" fill="#111"/><rect x="3" y="6" width="4.5" height="11" fill="#0000e0"/><rect x="7.5" y="3" width="4.5" height="14" fill="#f0f000"/><rect x="12" y="5" width="4.5" height="12" fill="#e00000"/><rect x="1" y="17.5" width="18" height="1.5" fill="#c0d8f0"/><path d="M2 1L4 3V6" stroke="#e0e0ff" stroke-width="1.2" fill="none"/></svg>
<div class="a" style="left:83px;top:360px;width:27px;height:2px;background:#fff"></div>
<div class="t" style="left:149.5px;top:375.5px;font:15px 'Liberation Mono', monospace;color:#fff;-webkit-text-stroke:0.2px #fff">Pair 4</div>
<div class="t" style="left:221.5px;top:375.5px;font:15px 'Liberation Mono', monospace;color:#fff;-webkit-text-stroke:0.2px #fff">No Group</div>
<div class="t" style="left:329.5px;top:375.5px;font:15px 'Liberation Mono', monospace;color:#fff;-webkit-text-stroke:0.2px #fff">Finished</div>
<div class="t" style="right:3267.5px;top:375.5px;font:15px 'Liberation Mono', monospace;color:#fff">6</div>
<div class="t" style="right:3151px;top:375.5px;font:15px 'Liberation Mono', monospace;color:#fff">6</div>
<div class="t" style="right:3005px;top:375.5px;font:15px 'Liberation Mono', monospace;color:#fff">60,000,000</div>
<div class="t" style="right:2861px;top:375.5px;font:15px 'Liberation Mono', monospace;color:#fff">6</div>
<div class="t" style="right:2753px;top:375.5px;font:15px 'Liberation Mono', monospace;color:#fff">57.904</div>
<div class="t" style="right:2654px;top:375.5px;font:15px 'Liberation Mono', monospace;color:#fff">94.893</div>
<svg class="a" style="left:17px;top:375px" width="20" height="20" viewBox="0 0 20 20"><rect x="1" y="3" width="17" height="16" fill="#111"/><rect x="3" y="6" width="4.5" height="11" fill="#0000e0"/><rect x="7.5" y="3" width="4.5" height="14" fill="#f0f000"/><rect x="12" y="5" width="4.5" height="12" fill="#e00000"/><rect x="1" y="17.5" width="18" height="1.5" fill="#c0d8f0"/><path d="M2 1L4 3V6" stroke="#e0e0ff" stroke-width="1.2" fill="none"/></svg>
<div class="a" style="left:83px;top:384px;width:27px;height:2px;background:#fff"></div>
<div class="t" style="left:149.5px;top:399.5px;font:15px 'Liberation Mono', monospace;color:#fff;-webkit-text-stroke:0.2px #fff">Pair 5</div>
<div class="t" style="left:221.5px;top:399.5px;font:15px 'Liberation Mono', monospace;color:#fff;-webkit-text-stroke:0.2px #fff">No Group</div>
<div class="t" style="left:329.5px;top:399.5px;font:15px 'Liberation Mono', monospace;color:#fff;-webkit-text-stroke:0.2px #fff">Finished</div>
<div class="t" style="right:3267.5px;top:399.5px;font:15px 'Liberation Mono', monospace;color:#fff">0</div>
<div class="t" style="right:3151px;top:399.5px;font:15px 'Liberation Mono', monospace;color:#fff;-webkit-text-stroke:0.2px #fff">n/a</div>
<div class="t" style="right:3005px;top:399.5px;font:15px 'Liberation Mono', monospace;color:#fff;-webkit-text-stroke:0.2px #fff">n/a</div>
<div class="t" style="right:2861px;top:399.5px;font:15px 'Liberation Mono', monospace;color:#fff;-webkit-text-stroke:0.2px #fff">n/a</div>
<div class="t" style="right:2753px;top:399.5px;font:15px 'Liberation Mono', monospace;color:#fff;-webkit-text-stroke:0.2px #fff">n/a</div>
<div class="t" style="right:2654px;top:399.5px;font:15px 'Liberation Mono', monospace;color:#fff;-webkit-text-stroke:0.2px #fff">n/a</div>
<svg class="a" style="left:17px;top:399px" width="20" height="20" viewBox="0 0 20 20"><rect x="1" y="3" width="17" height="16" fill="#111"/><rect x="3" y="6" width="4.5" height="11" fill="#0000e0"/><rect x="7.5" y="3" width="4.5" height="14" fill="#f0f000"/><rect x="12" y="5" width="4.5" height="12" fill="#e00000"/><rect x="1" y="17.5" width="18" height="1.5" fill="#c0d8f0"/><path d="M2 1L4 3V6" stroke="#e0e0ff" stroke-width="1.2" fill="none"/></svg>
<div class="a" style="left:83px;top:408px;width:27px;height:2px;background:#fff"></div>
<div class="t" style="left:149.5px;top:423.5px;font:15px 'Liberation Mono', monospace;color:#fff;-webkit-text-stroke:0.2px #fff">Pair 6</div>
<div class="t" style="left:221.5px;top:423.5px;font:15px 'Liberation Mono', monospace;color:#fff;-webkit-text-stroke:0.2px #fff">No Group</div>
<div class="t" style="left:329.5px;top:423.5px;font:15px 'Liberation Mono', monospace;color:#fff;-webkit-text-stroke:0.2px #fff">Finished</div>
<div class="t" style="right:3267.5px;top:423.5px;font:15px 'Liberation Mono', monospace;color:#fff">17</div>
<div class="t" style="right:3151px;top:423.5px;font:15px 'Liberation Mono', monospace;color:#fff">17</div>
<div class="t" style="right:3005px;top:423.5px;font:15px 'Liberation Mono', monospace;color:#fff">170,000,000</div>
<div class="t" style="right:2861px;top:423.5px;font:15px 'Liberation Mono', monospace;color:#fff">17</div>
<div class="t" style="right:2753px;top:423.5px;font:15px 'Liberation Mono', monospace;color:#fff">57.369</div>
<div class="t" style="right:2654px;top:423.5px;font:15px 'Liberation Mono', monospace;color:#fff">44.545</div>
<svg class="a" style="left:17px;top:423px" width="20" height="20" viewBox="0 0 20 20"><rect x="1" y="3" width="17" height="16" fill="#111"/><rect x="3" y="6" width="4.5" height="11" fill="#0000e0"/><rect x="7.5" y="3" width="4.5" height="14" fill="#f0f000"/><rect x="12" y="5" width="4.5" height="12" fill="#e00000"/><rect x="1" y="17.5" width="18" height="1.5" fill="#c0d8f0"/><path d="M2 1L4 3V6" stroke="#e0e0ff" stroke-width="1.2" fill="none"/></svg>
<div class="a" style="left:83px;top:432px;width:27px;height:2px;background:#fff"></div>
<div class="t" style="left:149.5px;top:447.5px;font:15px 'Liberation Mono', monospace;color:#fff;-webkit-text-stroke:0.2px #fff">Pair 7</div>
<div class="t" style="left:221.5px;top:447.5px;font:15px 'Liberation Mono', monospace;color:#fff;-webkit-text-stroke:0.2px #fff">No Group</div>
<div class="t" style="left:329.5px;top:447.5px;font:15px 'Liberation Mono', monospace;color:#fff;-webkit-text-stroke:0.2px #fff">Finished</div>
<div class="t" style="right:3267.5px;top:447.5px;font:15px 'Liberation Mono', monospace;color:#fff">36</div>
<div class="t" style="right:3151px;top:447.5px;font:15px 'Liberation Mono', monospace;color:#fff">36</div>
<div class="t" style="right:3005px;top:447.5px;font:15px 'Liberation Mono', monospace;color:#fff">360,000,000</div>
<div class="t" style="right:2861px;top:447.5px;font:15px 'Liberation Mono', monospace;color:#fff">36</div>
<div class="t" style="right:2753px;top:447.5px;font:15px 'Liberation Mono', monospace;color:#fff">58.106</div>
<div class="t" style="right:2654px;top:447.5px;font:15px 'Liberation Mono', monospace;color:#fff">10.091</div>
<svg class="a" style="left:17px;top:447px" width="20" height="20" viewBox="0 0 20 20"><rect x="1" y="3" width="17" height="16" fill="#111"/><rect x="3" y="6" width="4.5" height="11" fill="#0000e0"/><rect x="7.5" y="3" width="4.5" height="14" fill="#f0f000"/><rect x="12" y="5" width="4.5" height="12" fill="#e00000"/><rect x="1" y="17.5" width="18" height="1.5" fill="#c0d8f0"/><path d="M2 1L4 3V6" stroke="#e0e0ff" stroke-width="1.2" fill="none"/></svg>
<div class="a" style="left:83px;top:456px;width:27px;height:2px;background:#fff"></div>
<div class="t" style="left:149.5px;top:471.5px;font:15px 'Liberation Mono', monospace;color:#fff;-webkit-text-stroke:0.2px #fff">Pair 8</div>
<div class="t" style="left:221.5px;top:471.5px;font:15px 'Liberation Mono', monospace;color:#fff;-webkit-text-stroke:0.2px #fff">No Group</div>
<div class="t" style="left:329.5px;top:471.5px;font:15px 'Liberation Mono', monospace;color:#fff;-webkit-text-stroke:0.2px #fff">Finished</div>
<div class="t" style="right:3267.5px;top:471.5px;font:15px 'Liberation Mono', monospace;color:#fff">11</div>
<div class="t" style="right:3151px;top:471.5px;font:15px 'Liberation Mono', monospace;color:#fff">11</div>
<div class="t" style="right:3005px;top:471.5px;font:15px 'Liberation Mono', monospace;color:#fff">110,000,000</div>
<div class="t" style="right:2861px;top:471.5px;font:15px 'Liberation Mono', monospace;color:#fff">11</div>
<div class="t" style="right:2753px;top:471.5px;font:15px 'Liberation Mono', monospace;color:#fff">49.679</div>
<div class="t" style="right:2654px;top:471.5px;font:15px 'Liberation Mono', monospace;color:#fff">53.518</div>
<svg class="a" style="left:17px;top:471px" width="20" height="20" viewBox="0 0 20 20"><rect x="1" y="3" width="17" height="16" fill="#111"/><rect x="3" y="6" width="4.5" height="11" fill="#0000e0"/><rect x="7.5" y="3" width="4.5" height="14" fill="#f0f000"/><rect x="12" y="5" width="4.5" height="12" fill="#e00000"/><rect x="1" y="17.5" width="18" height="1.5" fill="#c0d8f0"/><path d="M2 1L4 3V6" stroke="#e0e0ff" stroke-width="1.2" fill="none"/></svg>
<div class="a" style="left:83px;top:480px;width:27px;height:2px;background:#fff"></div>
<div class="t" style="left:149.5px;top:495.5px;font:15px 'Liberation Mono', monospace;color:#fff;-webkit-text-stroke:0.2px #fff">Pair 9</div>
<div class="t" style="left:221.5px;top:495.5px;font:15px 'Liberation Mono', monospace;color:#fff;-webkit-text-stroke:0.2px #fff">No Group</div>
<div class="t" style="left:329.5px;top:495.5px;font:15px 'Liberation Mono', monospace;color:#fff;-webkit-text-stroke:0.2px #fff">Finished</div>
<div class="t" style="right:3267.5px;top:495.5px;font:15px 'Liberation Mono', monospace;color:#fff">7</div>
<div class="t" style="right:3151px;top:495.5px;font:15px 'Liberation Mono', monospace;color:#fff">7</div>
<div class="t" style="right:3005px;top:495.5px;font:15px 'Liberation Mono', monospace;color:#fff">70,000,000</div>
<div class="t" style="right:2861px;top:495.5px;font:15px 'Liberation Mono', monospace;color:#fff">7</div>
<div class="t" style="right:2753px;top:495.5px;font:15px 'Liberation Mono', monospace;color:#fff">58.933</div>
<div class="t" style="right:2654px;top:495.5px;font:15px 'Liberation Mono', monospace;color:#fff">39.496</div>
<svg class="a" style="left:17px;top:495px" width="20" height="20" viewBox="0 0 20 20"><rect x="1" y="3" width="17" height="16" fill="#111"/><rect x="3" y="6" width="4.5" height="11" fill="#0000e0"/><rect x="7.5" y="3" width="4.5" height="14" fill="#f0f000"/><rect x="12" y="5" width="4.5" height="12" fill="#e00000"/><rect x="1" y="17.5" width="18" height="1.5" fill="#c0d8f0"/><path d="M2 1L4 3V6" stroke="#e0e0ff" stroke-width="1.2" fill="none"/></svg>
<div class="a" style="left:83px;top:504px;width:27px;height:2px;background:#fff"></div>
<div class="t" style="left:149.5px;top:519.5px;font:15px 'Liberation Mono', monospace;color:#fff;-webkit-text-stroke:0.2px #fff">Pair 10</div>
<div class="t" style="left:221.5px;top:519.5px;font:15px 'Liberation Mono', monospace;color:#fff;-webkit-text-stroke:0.2px #fff">No Group</div>
<div class="t" style="left:329.5px;top:519.5px;font:15px 'Liberation Mono', monospace;color:#fff;-webkit-text-stroke:0.2px #fff">Finished</div>
<div class="t" style="right:3267.5px;top:519.5px;font:15px 'Liberation Mono', monospace;color:#fff">13</div>
<div class="t" style="right:3151px;top:519.5px;font:15px 'Liberation Mono', monospace;color:#fff">13</div>
<div class="t" style="right:3005px;top:519.5px;font:15px 'Liberation Mono', monospace;color:#fff">130,000,000</div>
<div class="t" style="right:2861px;top:519.5px;font:15px 'Liberation Mono', monospace;color:#fff">13</div>
<div class="t" style="right:2753px;top:519.5px;font:15px 'Liberation Mono', monospace;color:#fff">52.711</div>
<div class="t" style="right:2654px;top:519.5px;font:15px 'Liberation Mono', monospace;color:#fff">51.208</div>
<svg class="a" style="left:17px;top:519px" width="20" height="20" viewBox="0 0 20 20"><rect x="1" y="3" width="17" height="16" fill="#111"/><rect x="3" y="6" width="4.5" height="11" fill="#0000e0"/><rect x="7.5" y="3" width="4.5" height="14" fill="#f0f000"/><rect x="12" y="5" width="4.5" height="12" fill="#e00000"/><rect x="1" y="17.5" width="18" height="1.5" fill="#c0d8f0"/><path d="M2 1L4 3V6" stroke="#e0e0ff" stroke-width="1.2" fill="none"/></svg>
<div class="a" style="left:83px;top:528px;width:27px;height:2px;background:#fff"></div>
<div class="t" style="left:149.5px;top:543.5px;font:15px 'Liberation Mono', monospace;color:#fff;-webkit-text-stroke:0.2px #fff">Pair 11</div>
<div class="t" style="left:221.5px;top:543.5px;font:15px 'Liberation Mono', monospace;color:#fff;-webkit-text-stroke:0.2px #fff">No Group</div>
<div class="t" style="left:329.5px;top:543.5px;font:15px 'Liberation Mono', monospace;color:#fff;-webkit-text-stroke:0.2px #fff">Finished</div>
<div class="t" style="right:3267.5px;top:543.5px;font:15px 'Liberation Mono', monospace;color:#fff">29</div>
<div class="t" style="right:3151px;top:543.5px;font:15px 'Liberation Mono', monospace;color:#fff">29</div>
<div class="t" style="right:3005px;top:543.5px;font:15px 'Liberation Mono', monospace;color:#fff">290,000,000</div>
<div class="t" style="right:2861px;top:543.5px;font:15px 'Liberation Mono', monospace;color:#fff">29</div>
<div class="t" style="right:2753px;top:543.5px;font:15px 'Liberation Mono', monospace;color:#fff">58.742</div>
<div class="t" style="right:2654px;top:543.5px;font:15px 'Liberation Mono', monospace;color:#fff">22.997</div>
<svg class="a" style="left:17px;top:543px" width="20" height="20" viewBox="0 0 20 20"><rect x="1" y="3" width="17" height="16" fill="#111"/><rect x="3" y="6" width="4.5" height="11" fill="#0000e0"/><rect x="7.5" y="3" width="4.5" height="14" fill="#f0f000"/><rect x="12" y="5" width="4.5" height="12" fill="#e00000"/><rect x="1" y="17.5" width="18" height="1.5" fill="#c0d8f0"/><path d="M2 1L4 3V6" stroke="#e0e0ff" stroke-width="1.2" fill="none"/></svg>
<div class="a" style="left:83px;top:552px;width:27px;height:2px;background:#fff"></div>
<div class="t" style="left:149.5px;top:567.5px;font:15px 'Liberation Mono', monospace;color:#fff;-webkit-text-stroke:0.2px #fff">Pair 12</div>
<div class="t" style="left:221.5px;top:567.5px;font:15px 'Liberation Mono', monospace;color:#fff;-webkit-text-stroke:0.2px #fff">No Group</div>
<div class="t" style="left:329.5px;top:567.5px;font:15px 'Liberation Mono', monospace;color:#fff;-webkit-text-stroke:0.2px #fff">Finished</div>
<div class="t" style="right:3267.5px;top:567.5px;font:15px 'Liberation Mono', monospace;color:#fff">0</div>
<div class="t" style="right:3151px;top:567.5px;font:15px 'Liberation Mono', monospace;color:#fff;-webkit-text-stroke:0.2px #fff">n/a</div>
<div class="t" style="right:3005px;top:567.5px;font:15px 'Liberation Mono', monospace;color:#fff;-webkit-text-stroke:0.2px #fff">n/a</div>
<div class="t" style="right:2861px;top:567.5px;font:15px 'Liberation Mono', monospace;color:#fff;-webkit-text-stroke:0.2px #fff">n/a</div>
<div class="t" style="right:2753px;top:567.5px;font:15px 'Liberation Mono', monospace;color:#fff;-webkit-text-stroke:0.2px #fff">n/a</div>
<div class="t" style="right:2654px;top:567.5px;font:15px 'Liberation Mono', monospace;color:#fff;-webkit-text-stroke:0.2px #fff">n/a</div>
<svg class="a" style="left:17px;top:567px" width="20" height="20" viewBox="0 0 20 20"><rect x="1" y="3" width="17" height="16" fill="#111"/><rect x="3" y="6" width="4.5" height="11" fill="#0000e0"/><rect x="7.5" y="3" width="4.5" height="14" fill="#f0f000"/><rect x="12" y="5" width="4.5" height="12" fill="#e00000"/><rect x="1" y="17.5" width="18" height="1.5" fill="#c0d8f0"/><path d="M2 1L4 3V6" stroke="#e0e0ff" stroke-width="1.2" fill="none"/></svg>
<div class="a" style="left:83px;top:576px;width:27px;height:2px;background:#fff"></div>
<div class="t" style="left:149.5px;top:591.5px;font:15px 'Liberation Mono', monospace;color:#fff;-webkit-text-stroke:0.2px #fff">Pair 13</div>
<div class="t" style="left:221.5px;top:591.5px;font:15px 'Liberation Mono', monospace;color:#fff;-webkit-text-stroke:0.2px #fff">No Group</div>
<div class="t" style="left:329.5px;top:591.5px;font:15px 'Liberation Mono', monospace;color:#fff;-webkit-text-stroke:0.2px #fff">Finished</div>
<div class="t" style="right:3267.5px;top:591.5px;font:15px 'Liberation Mono', monospace;color:#fff">3</div>
<div class="t" style="right:3151px;top:591.5px;font:15px 'Liberation Mono', monospace;color:#fff">3</div>
<div class="t" style="right:3005px;top:591.5px;font:15px 'Liberation Mono', monospace;color:#fff">30,000,000</div>
<div class="t" style="right:2861px;top:591.5px;font:15px 'Liberation Mono', monospace;color:#fff">3</div>
<div class="t" style="right:2753px;top:591.5px;font:15px 'Liberation Mono', monospace;color:#fff">49.832</div>
<div class="t" style="right:2654px;top:591.5px;font:15px 'Liberation Mono', monospace;color:#fff">118.171</div>
<svg class="a" style="left:17px;top:591px" width="20" height="20" viewBox="0 0 20 20"><rect x="1" y="3" width="17" height="16" fill="#111"/><rect x="3" y="6" width="4.5" height="11" fill="#0000e0"/><rect x="7.5" y="3" width="4.5" height="14" fill="#f0f000"/><rect x="12" y="5" width="4.5" height="12" fill="#e00000"/><rect x="1" y="17.5" width="18" height="1.5" fill="#c0d8f0"/><path d="M2 1L4 3V6" stroke="#e0e0ff" stroke-width="1.2" fill="none"/></svg>
<div class="a" style="left:83px;top:600px;width:27px;height:2px;background:#fff"></div>
<div class="t" style="left:149.5px;top:615.5px;font:15px 'Liberation Mono', monospace;color:#fff;-webkit-text-stroke:0.2px #fff">Pair 14</div>
<div class="t" style="left:221.5px;top:615.5px;font:15px 'Liberation Mono', monospace;color:#fff;-webkit-text-stroke:0.2px #fff">No Group</div>
<div class="t" style="left:329.5px;top:615.5px;font:15px 'Liberation Mono', monospace;color:#fff;-webkit-text-stroke:0.2px #fff">Finished</div>
<div class="t" style="right:3267.5px;top:615.5px;font:15px 'Liberation Mono', monospace;color:#fff">92</div>
<div class="t" style="right:3151px;top:615.5px;font:15px 'Liberation Mono', monospace;color:#fff">92</div>
<div class="t" style="right:3005px;top:615.5px;font:15px 'Liberation Mono', monospace;color:#fff">920,000,000</div>
<div class="t" style="right:2861px;top:615.5px;font:15px 'Liberation Mono', monospace;color:#fff">92</div>
<div class="t" style="right:2753px;top:615.5px;font:15px 'Liberation Mono', monospace;color:#fff">58.689</div>
<div class="t" style="right:2654px;top:615.5px;font:15px 'Liberation Mono', monospace;color:#fff">5.553</div>
<svg class="a" style="left:17px;top:615px" width="20" height="20" viewBox="0 0 20 20"><rect x="1" y="3" width="17" height="16" fill="#111"/><rect x="3" y="6" width="4.5" height="11" fill="#0000e0"/><rect x="7.5" y="3" width="4.5" height="14" fill="#f0f000"/><rect x="12" y="5" width="4.5" height="12" fill="#e00000"/><rect x="1" y="17.5" width="18" height="1.5" fill="#c0d8f0"/><path d="M2 1L4 3V6" stroke="#e0e0ff" stroke-width="1.2" fill="none"/></svg>
<div class="a" style="left:83px;top:624px;width:27px;height:2px;background:#fff"></div>
<div class="t" style="left:149.5px;top:639.5px;font:15px 'Liberation Mono', monospace;color:#fff;-webkit-text-stroke:0.2px #fff">Pair 15</div>
<div class="t" style="left:221.5px;top:639.5px;font:15px 'Liberation Mono', monospace;color:#fff;-webkit-text-stroke:0.2px #fff">No Group</div>
<div class="t" style="left:329.5px;top:639.5px;font:15px 'Liberation Mono', monospace;color:#fff;-webkit-text-stroke:0.2px #fff">Finished</div>
<div class="t" style="right:3267.5px;top:639.5px;font:15px 'Liberation Mono', monospace;color:#fff">74</div>
<div class="t" style="right:3151px;top:639.5px;font:15px 'Liberation Mono', monospace;color:#fff">74</div>
<div class="t" style="right:3005px;top:639.5px;font:15px 'Liberation Mono', monospace;color:#fff">740,000,000</div>
<div class="t" style="right:2861px;top:639.5px;font:15px 'Liberation Mono', monospace;color:#fff">74</div>
<div class="t" style="right:2753px;top:639.5px;font:15px 'Liberation Mono', monospace;color:#fff">51.518</div>
<div class="t" style="right:2654px;top:639.5px;font:15px 'Liberation Mono', monospace;color:#fff">10.752</div>
<svg class="a" style="left:17px;top:639px" width="20" height="20" viewBox="0 0 20 20"><rect x="1" y="3" width="17" height="16" fill="#111"/><rect x="3" y="6" width="4.5" height="11" fill="#0000e0"/><rect x="7.5" y="3" width="4.5" height="14" fill="#f0f000"/><rect x="12" y="5" width="4.5" height="12" fill="#e00000"/><rect x="1" y="17.5" width="18" height="1.5" fill="#c0d8f0"/><path d="M2 1L4 3V6" stroke="#e0e0ff" stroke-width="1.2" fill="none"/></svg>
<div class="a" style="left:83px;top:648px;width:27px;height:2px;background:#fff"></div>
<div class="t" style="left:149.5px;top:663.5px;font:15px 'Liberation Mono', monospace;color:#fff;-webkit-text-stroke:0.2px #fff">Pair 16</div>
<div class="t" style="left:221.5px;top:663.5px;font:15px 'Liberation Mono', monospace;color:#fff;-webkit-text-stroke:0.2px #fff">No Group</div>
<div class="t" style="left:329.5px;top:663.5px;font:15px 'Liberation Mono', monospace;color:#fff;-webkit-text-stroke:0.2px #fff">Finished</div>
<div class="t" style="right:3267.5px;top:663.5px;font:15px 'Liberation Mono', monospace;color:#fff">43</div>
<div class="t" style="right:3151px;top:663.5px;font:15px 'Liberation Mono', monospace;color:#fff">43</div>
<div class="t" style="right:3005px;top:663.5px;font:15px 'Liberation Mono', monospace;color:#fff">430,000,000</div>
<div class="t" style="right:2861px;top:663.5px;font:15px 'Liberation Mono', monospace;color:#fff">43</div>
<div class="t" style="right:2753px;top:663.5px;font:15px 'Liberation Mono', monospace;color:#fff">58.991</div>
<div class="t" style="right:2654px;top:663.5px;font:15px 'Liberation Mono', monospace;color:#fff">36.087</div>
<svg class="a" style="left:17px;top:663px" width="20" height="20" viewBox="0 0 20 20"><rect x="1" y="3" width="17" height="16" fill="#111"/><rect x="3" y="6" width="4.5" height="11" fill="#0000e0"/><rect x="7.5" y="3" width="4.5" height="14" fill="#f0f000"/><rect x="12" y="5" width="4.5" height="12" fill="#e00000"/><rect x="1" y="17.5" width="18" height="1.5" fill="#c0d8f0"/><path d="M2 1L4 3V6" stroke="#e0e0ff" stroke-width="1.2" fill="none"/></svg>
<div class="a" style="left:83px;top:672px;width:27px;height:2px;background:#fff"></div>
<div class="t" style="left:149.5px;top:687.5px;font:15px 'Liberation Mono', monospace;color:#fff;-webkit-text-stroke:0.2px #fff">Pair 17</div>
<div class="t" style="left:221.5px;top:687.5px;font:15px 'Liberation Mono', monospace;color:#fff;-webkit-text-stroke:0.2px #fff">No Group</div>
<div class="t" style="left:329.5px;top:687.5px;font:15px 'Liberation Mono', monospace;color:#fff;-webkit-text-stroke:0.2px #fff">Finished</div>
<div class="t" style="right:3267.5px;top:687.5px;font:15px 'Liberation Mono', monospace;color:#fff">33</div>
<div class="t" style="right:3151px;top:687.5px;font:15px 'Liberation Mono', monospace;color:#fff">33</div>
<div class="t" style="right:3005px;top:687.5px;font:15px 'Liberation Mono', monospace;color:#fff">330,000,000</div>
<div class="t" style="right:2861px;top:687.5px;font:15px 'Liberation Mono', monospace;color:#fff">33</div>
<div class="t" style="right:2753px;top:687.5px;font:15px 'Liberation Mono', monospace;color:#fff">58.993</div>
<div class="t" style="right:2654px;top:687.5px;font:15px 'Liberation Mono', monospace;color:#fff">13.906</div>
<svg class="a" style="left:17px;top:687px" width="20" height="20" viewBox="0 0 20 20"><rect x="1" y="3" width="17" height="16" fill="#111"/><rect x="3" y="6" width="4.5" height="11" fill="#0000e0"/><rect x="7.5" y="3" width="4.5" height="14" fill="#f0f000"/><rect x="12" y="5" width="4.5" height="12" fill="#e00000"/><rect x="1" y="17.5" width="18" height="1.5" fill="#c0d8f0"/><path d="M2 1L4 3V6" stroke="#e0e0ff" stroke-width="1.2" fill="none"/></svg>
<div class="a" style="left:83px;top:696px;width:27px;height:2px;background:#fff"></div>
<div class="t" style="left:149.5px;top:711.5px;font:15px 'Liberation Mono', monospace;color:#fff;-webkit-text-stroke:0.2px #fff">Pair 18</div>
<div class="t" style="left:221.5px;top:711.5px;font:15px 'Liberation Mono', monospace;color:#fff;-webkit-text-stroke:0.2px #fff">No Group</div>
<div class="t" style="left:329.5px;top:711.5px;font:15px 'Liberation Mono', monospace;color:#fff;-webkit-text-stroke:0.2px #fff">Finished</div>
<div class="t" style="right:3267.5px;top:711.5px;font:15px 'Liberation Mono', monospace;color:#fff">31</div>
<div class="t" style="right:3151px;top:711.5px;font:15px 'Liberation Mono', monospace;color:#fff">31</div>
<div class="t" style="right:3005px;top:711.5px;font:15px 'Liberation Mono', monospace;color:#fff">310,000,000</div>
<div class="t" style="right:2861px;top:711.5px;font:15px 'Liberation Mono', monospace;color:#fff">31</div>
<div class="t" style="right:2753px;top:711.5px;font:15px 'Liberation Mono', monospace;color:#fff">50.272</div>
<div class="t" style="right:2654px;top:711.5px;font:15px 'Liberation Mono', monospace;color:#fff">7.682</div>
<svg class="a" style="left:17px;top:711px" width="20" height="20" viewBox="0 0 20 20"><rect x="1" y="3" width="17" height="16" fill="#111"/><rect x="3" y="6" width="4.5" height="11" fill="#0000e0"/><rect x="7.5" y="3" width="4.5" height="14" fill="#f0f000"/><rect x="12" y="5" width="4.5" height="12" fill="#e00000"/><rect x="1" y="17.5" width="18" height="1.5" fill="#c0d8f0"/><path d="M2 1L4 3V6" stroke="#e0e0ff" stroke-width="1.2" fill="none"/></svg>
<div class="a" style="left:83px;top:720px;width:27px;height:2px;background:#fff"></div>
<div class="t" style="left:149.5px;top:735.5px;font:15px 'Liberation Mono', monospace;color:#fff;-webkit-text-stroke:0.2px #fff">Pair 19</div>
<div class="t" style="left:221.5px;top:735.5px;font:15px 'Liberation Mono', monospace;color:#fff;-webkit-text-stroke:0.2px #fff">No Group</div>
<div class="t" style="left:329.5px;top:735.5px;font:15px 'Liberation Mono', monospace;color:#fff;-webkit-text-stroke:0.2px #fff">Finished</div>
<div class="t" style="right:3267.5px;top:735.5px;font:15px 'Liberation Mono', monospace;color:#fff">24</div>
<div class="t" style="right:3151px;top:735.5px;font:15px 'Liberation Mono', monospace;color:#fff">24</div>
<div class="t" style="right:3005px;top:735.5px;font:15px 'Liberation Mono', monospace;color:#fff">240,000,000</div>
<div class="t" style="right:2861px;top:735.5px;font:15px 'Liberation Mono', monospace;color:#fff">24</div>
<div class="t" style="right:2753px;top:735.5px;font:15px 'Liberation Mono', monospace;color:#fff">54.143</div>
<div class="t" style="right:2654px;top:735.5px;font:15px 'Liberation Mono', monospace;color:#fff">39.882</div>
<svg class="a" style="left:17px;top:735px" width="20" height="20" viewBox="0 0 20 20"><rect x="1" y="3" width="17" height="16" fill="#111"/><rect x="3" y="6" width="4.5" height="11" fill="#0000e0"/><rect x="7.5" y="3" width="4.5" height="14" fill="#f0f000"/><rect x="12" y="5" width="4.5" height="12" fill="#e00000"/><rect x="1" y="17.5" width="18" height="1.5" fill="#c0d8f0"/><path d="M2 1L4 3V6" stroke="#e0e0ff" stroke-width="1.2" fill="none"/></svg>
<div class="a" style="left:83px;top:744px;width:27px;height:2px;background:#fff"></div>
<div class="t" style="left:149.5px;top:759.5px;font:15px 'Liberation Mono', monospace;color:#fff;-webkit-text-stroke:0.2px #fff">Pair 20</div>
<div class="t" style="left:221.5px;top:759.5px;font:15px 'Liberation Mono', monospace;color:#fff;-webkit-text-stroke:0.2px #fff">No Group</div>
<div class="t" style="left:329.5px;top:759.5px;font:15px 'Liberation Mono', monospace;color:#fff;-webkit-text-stroke:0.2px #fff">Finished</div>
<div class="t" style="right:3267.5px;top:759.5px;font:15px 'Liberation Mono', monospace;color:#fff">9</div>
<div class="t" style="right:3151px;top:759.5px;font:15px 'Liberation Mono', monospace;color:#fff">9</div>
<div class="t" style="right:3005px;top:759.5px;font:15px 'Liberation Mono', monospace;color:#fff">90,000,000</div>
<div class="t" style="right:2861px;top:759.5px;font:15px 'Liberation Mono', monospace;color:#fff">9</div>
<div class="t" style="right:2753px;top:759.5px;font:15px 'Liberation Mono', monospace;color:#fff">52.039</div>
<div class="t" style="right:2654px;top:759.5px;font:15px 'Liberation Mono', monospace;color:#fff">105.335</div>
<svg class="a" style="left:17px;top:759px" width="20" height="20" viewBox="0 0 20 20"><rect x="1" y="3" width="17" height="16" fill="#111"/><rect x="3" y="6" width="4.5" height="11" fill="#0000e0"/><rect x="7.5" y="3" width="4.5" height="14" fill="#f0f000"/><rect x="12" y="5" width="4.5" height="12" fill="#e00000"/><rect x="1" y="17.5" width="18" height="1.5" fill="#c0d8f0"/><path d="M2 1L4 3V6" stroke="#e0e0ff" stroke-width="1.2" fill="none"/></svg>
<div class="a" style="left:83px;top:768px;width:27px;height:2px;background:#fff"></div>
<div class="a" style="left:82.5px;top:300px;width:2px;height:470px;background:#fff"></div>
<div class="a" style="left:48px;top:280px;width:16px;height:16px;background:#e4e2de;border:2px solid #000"></div>
<div class="a" style="left:52px;top:287px;width:8px;height:2px;background:#000"></div>
<div class="a" style="left:3807px;top:224px;width:26px;height:795px;background:#f0f0f0"></div>
<div class="a" style="left:8px;top:1019px;width:3799px;height:24px;background:#f0f0f0"></div>
<div class="a" style="left:3807px;top:1019px;width:26px;height:24px;background:#f0f0f0"></div>
<svg class="a" style="left:0;top:0;overflow:visible" width="1" height="1"><path d="M3814.7 238.5L3819.7 233.5L3824.7 238.5" stroke="#b0b0b0" stroke-width="2.2" fill="none"/></svg>
<svg class="a" style="left:0;top:0;overflow:visible" width="1" height="1"><path d="M3814.7 1003.0L3819.7 1008.0L3824.7 1003.0" stroke="#b0b0b0" stroke-width="2.2" fill="none"/></svg>
<svg class="a" style="left:0;top:0;overflow:visible" width="1" height="1"><path d="M22.1 1025.5L17.1 1030.5L22.1 1035.5" stroke="#b0b0b0" stroke-width="2.2" fill="none"/></svg>
<svg class="a" style="left:0;top:0;overflow:visible" width="1" height="1"><path d="M3792.2 1025.5L3797.2 1030.5L3792.2 1035.5" stroke="#b0b0b0" stroke-width="2.2" fill="none"/></svg>
<div class="a" style="left:6px;top:1045px;width:3828px;height:11px;background:#c2c2c2"></div>
<div class="a" style="left:6px;top:1055px;width:3828px;height:1px;background:#969696"></div>
<div class="a" style="left:1px;top:1056px;width:3058px;height:1008px;background:#fff"></div>
<div class="a" style="left:3px;top:1056px;width:1px;height:1008px;background:#e6e6e6"></div>
<div class="t" style="left:18.8px;top:1069px;width:21px;text-align:center;font:27px 'Liberation Serif',serif;color:#181818;">R</div>
<div class="t" style="left:33.9px;top:1069px;width:21px;text-align:center;font:27px 'Liberation Serif',serif;color:#181818;">e</div>
<div class="t" style="left:49.0px;top:1069px;width:21px;text-align:center;font:27px 'Liberation Serif',serif;color:#181818;">s</div>
<div class="t" style="left:64.1px;top:1069px;width:21px;text-align:center;font:27px 'Liberation Serif',serif;color:#181818;">p</div>
<div class="t" style="left:79.2px;top:1069px;width:21px;text-align:center;font:27px 'Liberation Serif',serif;color:#181818;">o</div>
<div class="t" style="left:94.3px;top:1069px;width:21px;text-align:center;font:27px 'Liberation Serif',serif;color:#181818;">n</div>
<div class="t" style="left:109.4px;top:1069px;width:21px;text-align:center;font:27px 'Liberation Serif',serif;color:#181818;">s</div>
<div class="t" style="left:124.5px;top:1069px;width:21px;text-align:center;font:27px 'Liberation Serif',serif;color:#181818;">e</div>
<div class="t" style="left:154.7px;top:1069px;width:21px;text-align:center;font:27px 'Liberation Serif',serif;color:#181818;">t</div>
<div class="t" style="left:169.8px;top:1069px;width:21px;text-align:center;font:27px 'Liberation Serif',serif;color:#181818;">i</div>
<div class="t" style="left:184.9px;top:1069px;width:21px;text-align:center;font:27px 'Liberation Serif',serif;color:#181818;transform:scaleX(0.72)">m</div>
<div class="t" style="left:200.0px;top:1069px;width:21px;text-align:center;font:27px 'Liberation Serif',serif;color:#181818;">e</div>
<div class="t" style="right:3749.5px;top:1104.9px;font:17px 'Liberation Mono', monospace;letter-spacing:-1.2px;color:#222">28.350</div>
<div class="t" style="right:3749.5px;top:1147.0px;font:17px 'Liberation Mono', monospace;letter-spacing:-1.2px;color:#222">27.000</div>
<div class="t" style="right:3749.5px;top:1178.1px;font:17px 'Liberation Mono', monospace;letter-spacing:-1.2px;color:#222">26.000</div>
<div class="t" style="right:3749.5px;top:1209.2px;font:17px 'Liberation Mono', monospace;letter-spacing:-1.2px;color:#222">25.000</div>
<div class="t" style="right:3749.5px;top:1240.4px;font:17px 'Liberation Mono', monospace;letter-spacing:-1.2px;color:#222">24.000</div>
<div class="t" style="right:3749.5px;top:1271.6px;font:17px 'Liberation Mono', monospace;letter-spacing:-1.2px;color:#222">23.000</div>
<div class="t" style="right:3749.5px;top:1302.7px;font:17px 'Liberation Mono', monospace;letter-spacing:-1.2px;color:#222">22.000</div>
<div class="t" style="right:3749.5px;top:1333.8px;font:17px 'Liberation Mono', monospace;letter-spacing:-1.2px;color:#222">21.000</div>
<div class="t" style="right:3749.5px;top:1365.0px;font:17px 'Liberation Mono', monospace;letter-spacing:-1.2px;color:#222">20.000</div>
<div class="t" style="right:3749.5px;top:1396.2px;font:17px 'Liberation Mono', monospace;letter-spacing:-1.2px;color:#222">19.000</div>
<div class="t" style="right:3749.5px;top:1427.3px;font:17px 'Liberation Mono', monospace;letter-spacing:-1.2px;color:#222">18.000</div>
<div class="t" style="right:3749.5px;top:1458.5px;font:17px 'Liberation Mono', monospace;letter-spacing:-1.2px;color:#222">17.000</div>
<div class="t" style="right:3749.5px;top:1489.6px;font:17px 'Liberation Mono', monospace;letter-spacing:-1.2px;color:#222">16.000</div>
<div class="t" style="right:3749.5px;top:1520.8px;font:17px 'Liberation Mono', monospace;letter-spacing:-1.2px;color:#222">15.000</div>
<div class="t" style="right:3749.5px;top:1551.9px;font:17px 'Liberation Mono', monospace;letter-spacing:-1.2px;color:#222">14.000</div>
<div class="t" style="right:3749.5px;top:1583.0px;font:17px 'Liberation Mono', monospace;letter-spacing:-1.2px;color:#222">13.000</div>
<div class="t" style="right:3749.5px;top:1614.2px;font:17px 'Liberation Mono', monospace;letter-spacing:-1.2px;color:#222">12.000</div>
<div class="t" style="right:3749.5px;top:1645.3px;font:17px 'Liberation Mono', monospace;letter-spacing:-1.2px;color:#222">11.000</div>
<div class="t" style="right:3749.5px;top:1676.5px;font:17px 'Liberation Mono', monospace;letter-spacing:-1.2px;color:#222">10.000</div>
<div class="t" style="right:3749.5px;top:1707.7px;font:17px 'Liberation Mono', monospace;letter-spacing:-1.2px;color:#222">9.000</div>
<div class="t" style="right:3749.5px;top:1738.8px;font:17px 'Liberation Mono', monospace;letter-spacing:-1.2px;color:#222">8.000</div>
<div class="t" style="right:3749.5px;top:1770.0px;font:17px 'Liberation Mono', monospace;letter-spacing:-1.2px;color:#222">7.000</div>
<div class="t" style="right:3749.5px;top:1801.1px;font:17px 'Liberation Mono', monospace;letter-spacing:-1.2px;color:#222">6.000</div>
<div class="t" style="right:3749.5px;top:1832.2px;font:17px 'Liberation Mono', monospace;letter-spacing:-1.2px;color:#222">5.000</div>
<div class="t" style="right:3749.5px;top:1863.4px;font:17px 'Liberation Mono', monospace;letter-spacing:-1.2px;color:#222">4.000</div>
<div class="t" style="right:3749.5px;top:1894.5px;font:17px 'Liberation Mono', monospace;letter-spacing:-1.2px;color:#222">3.000</div>
<div class="t" style="right:3749.5px;top:1925.7px;font:17px 'Liberation Mono', monospace;letter-spacing:-1.2px;color:#222">2.000</div>
<div class="t" style="right:3749.5px;top:1956.8px;font:17px 'Liberation Mono', monospace;letter-spacing:-1.2px;color:#222">1.000</div>
<div class="t" style="right:3749.5px;top:1988.0px;font:17px 'Liberation Mono', monospace;letter-spacing:-1.2px;color:#222">0.000</div>
<div class="t" style="left:75.7px;top:2004px;width:64px;text-align:center;font:17px 'Liberation Mono', monospace;letter-spacing:-1.2px;color:#222">0:00:00</div>
<div class="t" style="left:557.2px;top:2004px;width:64px;text-align:center;font:17px 'Liberation Mono', monospace;letter-spacing:-1.2px;color:#222">0:00:10</div>
<div class="t" style="left:1040.2px;top:2004px;width:64px;text-align:center;font:17px 'Liberation Mono', monospace;letter-spacing:-1.2px;color:#222">0:00:20</div>
<div class="t" style="left:1523.2px;top:2004px;width:64px;text-align:center;font:17px 'Liberation Mono', monospace;letter-spacing:-1.2px;color:#222">0:00:30</div>
<div class="t" style="left:2006.2px;top:2004px;width:64px;text-align:center;font:17px 'Liberation Mono', monospace;letter-spacing:-1.2px;color:#222">0:00:40</div>
<div class="t" style="left:2489.2px;top:2004px;width:64px;text-align:center;font:17px 'Liberation Mono', monospace;letter-spacing:-1.2px;color:#222">0:00:50</div>
<div class="t" style="left:2972.2px;top:2004px;width:64px;text-align:center;font:17px 'Liberation Mono', monospace;letter-spacing:-1.2px;color:#222">0:01:00</div>
<div class="t" style="left:1437.0px;top:2031.5px;width:14px;text-align:center;font:18.5px 'Liberation Serif',serif;color:#111;">E</div>
<div class="t" style="left:1447.4px;top:2031.5px;width:14px;text-align:center;font:18.5px 'Liberation Serif',serif;color:#111;">l</div>
<div class="t" style="left:1457.8px;top:2031.5px;width:14px;text-align:center;font:18.5px 'Liberation Serif',serif;color:#111;">a</div>
<div class="t" style="left:1468.2px;top:2031.5px;width:14px;text-align:center;font:18.5px 'Liberation Serif',serif;color:#111;">p</div>
<div class="t" style="left:1478.6px;top:2031.5px;width:14px;text-align:center;font:18.5px 'Liberation Serif',serif;color:#111;">s</div>
<div class="t" style="left:1489.0px;top:2031.5px;width:14px;text-align:center;font:18.5px 'Liberation Serif',serif;color:#111;">e</div>
<div class="t" style="left:1499.4px;top:2031.5px;width:14px;text-align:center;font:18.5px 'Liberation Serif',serif;color:#111;">d</div>
<div class="t" style="left:1520.2px;top:2031.5px;width:14px;text-align:center;font:18.5px 'Liberation Serif',serif;color:#111;">t</div>
<div class="t" style="left:1530.6px;top:2031.5px;width:14px;text-align:center;font:18.5px 'Liberation Serif',serif;color:#111;">i</div>
<div class="t" style="left:1541.0px;top:2031.5px;width:14px;text-align:center;font:18.5px 'Liberation Serif',serif;color:#111;transform:scaleX(0.75)">m</div>
<div class="t" style="left:1551.4px;top:2031.5px;width:14px;text-align:center;font:18.5px 'Liberation Serif',serif;color:#111;">e</div>
<div class="t" style="left:1572.2px;top:2031.5px;width:14px;text-align:center;font:18.5px 'Liberation Serif',serif;color:#111;">(</div>
<div class="t" style="left:1582.6px;top:2031.5px;width:14px;text-align:center;font:18.5px 'Liberation Serif',serif;color:#111;">h</div>
<div class="t" style="left:1593.0px;top:2031.5px;width:14px;text-align:center;font:18.5px 'Liberation Serif',serif;color:#111;">:</div>
<div class="t" style="left:1603.4px;top:2031.5px;width:14px;text-align:center;font:18.5px 'Liberation Serif',serif;color:#111;transform:scaleX(0.75)">m</div>
<div class="t" style="left:1613.8px;top:2031.5px;width:14px;text-align:center;font:18.5px 'Liberation Serif',serif;color:#111;transform:scaleX(0.75)">m</div>
<div class="t" style="left:1624.2px;top:2031.5px;width:14px;text-align:center;font:18.5px 'Liberation Serif',serif;color:#111;">:</div>
<div class="t" style="left:1634.6px;top:2031.5px;width:14px;text-align:center;font:18.5px 'Liberation Serif',serif;color:#111;">s</div>
<div class="t" style="left:1645.0px;top:2031.5px;width:14px;text-align:center;font:18.5px 'Liberation Serif',serif;color:#111;">s</div>
<div class="t" style="left:1655.4px;top:2031.5px;width:14px;text-align:center;font:18.5px 'Liberation Serif',serif;color:#111;">)</div>
<div class="a" style="left:26.5px;top:1554px;width:0;height:0;transform:rotate(-90deg)"><div class="t" style="left:-38.5px;top:-9.5px;width:14px;text-align:center;font:18.5px 'Liberation Serif',serif;color:#111">S</div><div class="t" style="left:-28.1px;top:-9.5px;width:14px;text-align:center;font:18.5px 'Liberation Serif',serif;color:#111">e</div><div class="t" style="left:-17.7px;top:-9.5px;width:14px;text-align:center;font:18.5px 'Liberation Serif',serif;color:#111">c</div><div class="t" style="left:-7.3px;top:-9.5px;width:14px;text-align:center;font:18.5px 'Liberation Serif',serif;color:#111">o</div><div class="t" style="left:3.1px;top:-9.5px;width:14px;text-align:center;font:18.5px 'Liberation Serif',serif;color:#111">n</div><div class="t" style="left:13.5px;top:-9.5px;width:14px;text-align:center;font:18.5px 'Liberation Serif',serif;color:#111">d</div><div class="t" style="left:23.9px;top:-9.5px;width:14px;text-align:center;font:18.5px 'Liberation Serif',serif;color:#111">s</div></div>
<div class="a" style="left:3059px;top:1056px;width:12px;height:1004px;background:#c2c2c2"></div>
<div class="a" style="left:3059px;top:1056px;width:1px;height:1004px;background:#9a9a9a"></div>
<div class="a" style="left:3070px;top:1056px;width:2px;height:1004px;background:#6e6e6e"></div>
<div class="a" style="left:3072px;top:1056px;width:694px;height:1008px;background:#fff"></div>
<div class="t" style="left:3415.5px;top:1062.3px;font:bold 20px 'Liberation Sans', sans-serif;color:#111">Legend</div>
<div class="a" style="left:3071px;top:1089.5px;width:763px;height:2px;background:#6e6e6e"></div>
<div class="a" style="left:3071px;top:1089.5px;width:2px;height:970.5px;background:#6e6e6e"></div>
<div class="a" style="left:3832px;top:1089.5px;width:2px;height:974.5px;background:#6e6e6e"></div>
<div class="a" style="left:3807px;top:1091.5px;width:25px;height:944.5px;background:#f0f0f0"></div>
<div class="a" style="left:3073px;top:2036.5px;width:759px;height:27.5px;background:#f0f0f0"></div>
<svg class="a" style="left:0;top:0;overflow:visible" width="1" height="1"><path d="M3814.7 1108.0L3819.7 1103.0L3824.7 1108.0" stroke="#b0b0b0" stroke-width="2.2" fill="none"/></svg>
<svg class="a" style="left:0;top:0;overflow:visible" width="1" height="1"><path d="M3814.7 2020.0L3819.7 2025.0L3824.7 2020.0" stroke="#b0b0b0" stroke-width="2.2" fill="none"/></svg>
<svg class="a" style="left:0;top:0;overflow:visible" width="1" height="1"><path d="M3086.5 2043L3081.5 2048L3086.5 2053" stroke="#b0b0b0" stroke-width="2.2" fill="none"/></svg>
<svg class="a" style="left:0;top:0;overflow:visible" width="1" height="1"><path d="M3791.7 2043L3796.7 2048L3791.7 2053" stroke="#b0b0b0" stroke-width="2.2" fill="none"/></svg>
<div class="a" style="left:3082px;top:1098px;width:29px;height:2px;background:#ff0000"></div>
<div class="t" style="left:3116px;top:1092.8px;font:15px 'Liberation Mono', monospace;color:#ff0000;-webkit-text-stroke:0.1px #ff0000">Pair 1 -- test</div>
<div class="a" style="left:3082px;top:1115px;width:29px;height:2px;background:#00e000"></div>
<div class="t" style="left:3116px;top:1109.3px;font:15px 'Liberation Mono', monospace;color:#00e000;-webkit-text-stroke:0.1px #00e000">Pair 2 -- test</div>
<div class="a" style="left:3082px;top:1131px;width:29px;height:2px;background:#ff00ff"></div>
<div class="t" style="left:3116px;top:1125.9px;font:15px 'Liberation Mono', monospace;color:#ff00ff;-webkit-text-stroke:0.1px #ff00ff">Pair 3 -- test</div>
<div class="a" style="left:3082px;top:1148px;width:29px;height:2px;background:#00f0f0"></div>
<div class="t" style="left:3116px;top:1142.4px;font:15px 'Liberation Mono', monospace;color:#00f0f0;-webkit-text-stroke:0.1px #00f0f0">Pair 4 -- test</div>
<div class="a" style="left:3082px;top:1164px;width:29px;height:2px;background:#000000"></div>
<div class="t" style="left:3116px;top:1158.9px;font:15px 'Liberation Mono', monospace;color:#000000;-webkit-text-stroke:0.1px #000000">Pair 5 -- test</div>
<div class="a" style="left:3082px;top:1181px;width:29px;height:2px;background:#a09030"></div>
<div class="t" style="left:3116px;top:1175.5px;font:15px 'Liberation Mono', monospace;color:#a09030;-webkit-text-stroke:0.1px #a09030">Pair 6 -- test2</div>
<div class="a" style="left:3082px;top:1197px;width:29px;height:2px;background:#b07a20"></div>
<div class="t" style="left:3116px;top:1192.0px;font:15px 'Liberation Mono', monospace;color:#b07a20;-webkit-text-stroke:0.1px #b07a20">Pair 7 -- test2</div>
<div class="a" style="left:3082px;top:1214px;width:29px;height:2px;background:#2828a8"></div>
<div class="t" style="left:3116px;top:1208.5px;font:15px 'Liberation Mono', monospace;color:#2828a8;-webkit-text-stroke:0.1px #2828a8">Pair 8 -- test2</div>
<div class="a" style="left:3082px;top:1231px;width:29px;height:2px;background:#88a020"></div>
<div class="t" style="left:3116px;top:1225.0px;font:15px 'Liberation Mono', monospace;color:#88a020;-webkit-text-stroke:0.1px #88a020">Pair 9 -- test2</div>
<div class="a" style="left:3082px;top:1247px;width:29px;height:2px;background:#7a3a9a"></div>
<div class="t" style="left:3116px;top:1241.6px;font:15px 'Liberation Mono', monospace;color:#7a3a9a;-webkit-text-stroke:0.1px #7a3a9a">Pair 10 -- test2</div>
<div class="a" style="left:3082px;top:1264px;width:29px;height:2px;background:#28a028"></div>
<div class="t" style="left:3116px;top:1258.1px;font:15px 'Liberation Mono', monospace;color:#28a028;-webkit-text-stroke:0.1px #28a028">Pair 11 -- test</div>
<div class="a" style="left:3082px;top:1280px;width:29px;height:2px;background:#b02870"></div>
<div class="t" style="left:3116px;top:1274.6px;font:15px 'Liberation Mono', monospace;color:#b02870;-webkit-text-stroke:0.1px #b02870">Pair 12 -- test</div>
<div class="a" style="left:3082px;top:1297px;width:29px;height:2px;background:#20a080"></div>
<div class="t" style="left:3116px;top:1291.2px;font:15px 'Liberation Mono', monospace;color:#20a080;-webkit-text-stroke:0.1px #20a080">Pair 13 -- test</div>
<div class="a" style="left:3082px;top:1313px;width:29px;height:2px;background:#a82020"></div>
<div class="t" style="left:3116px;top:1307.7px;font:15px 'Liberation Mono', monospace;color:#a82020;-webkit-text-stroke:0.1px #a82020">Pair 14 -- test</div>
<div class="a" style="left:3082px;top:1330px;width:29px;height:2px;background:#2080b0"></div>
<div class="t" style="left:3116px;top:1324.2px;font:15px 'Liberation Mono', monospace;color:#2080b0;-webkit-text-stroke:0.1px #2080b0">Pair 15 -- test</div>
<div class="a" style="left:3082px;top:1346px;width:29px;height:2px;background:#505050"></div>
<div class="t" style="left:3116px;top:1340.8px;font:15px 'Liberation Mono', monospace;color:#505050;-webkit-text-stroke:0.1px #505050">Pair 16 -- test2</div>
<div class="a" style="left:3082px;top:1363px;width:29px;height:2px;background:#f0b050"></div>
<div class="t" style="left:3116px;top:1357.3px;font:15px 'Liberation Mono', monospace;color:#f0b050;-webkit-text-stroke:0.1px #f0b050">Pair 17 -- test2</div>
<div class="a" style="left:3082px;top:1379px;width:29px;height:2px;background:#4040c8"></div>
<div class="t" style="left:3116px;top:1373.8px;font:15px 'Liberation Mono', monospace;color:#4040c8;-webkit-text-stroke:0.1px #4040c8">Pair 18 -- test2</div>
<div class="a" style="left:3082px;top:1396px;width:29px;height:2px;background:#c0e040"></div>
<div class="t" style="left:3116px;top:1390.3px;font:15px 'Liberation Mono', monospace;color:#c0e040;-webkit-text-stroke:0.1px #c0e040">Pair 19 -- test2</div>
<div class="a" style="left:3082px;top:1412px;width:29px;height:2px;background:#a040e0"></div>
<div class="t" style="left:3116px;top:1406.9px;font:15px 'Liberation Mono', monospace;color:#a040e0;-webkit-text-stroke:0.1px #a040e0">Pair 20 -- test2</div>
<div class="a" style="left:0px;top:2064px;width:3840px;height:2px;background:#7a7a7a"></div>
<div class="a" style="left:0px;top:2066px;width:3840px;height:34px;background:#f0f0f0"></div>
<div class="t" style="left:12.5px;top:2073px;font:19px 'Liberation Sans', sans-serif;color:#1a1a1a;letter-spacing:0.2px">Pairs: 20</div>
<div class="t" style="left:136.5px;top:2073px;font:19px 'Liberation Sans', sans-serif;color:#1a1a1a;letter-spacing:0.2px">Start: 2019/9/18, 23:01:39</div>
<div class="t" style="left:531.5px;top:2073px;font:19px 'Liberation Sans', sans-serif;color:#1a1a1a;letter-spacing:0.2px">Ixia Configuratio</div>
<div class="t" style="left:700.5px;top:2073px;font:19px 'Liberation Sans', sans-serif;color:#1a1a1a;letter-spacing:0.2px">End: 2019/9/18, 23:02:39</div>
<div class="t" style="left:934px;top:2073px;font:19px 'Liberation Sans', sans-serif;color:#1a1a1a;letter-spacing:0.2px">Run time: 00:01:00</div>
<div class="t" style="left:1113px;top:2073px;font:19px 'Liberation Sans', sans-serif;color:#1a1a1a;letter-spacing:0.2px">Ran to completion</div>
<div class="a" style="left:125px;top:2071px;width:1px;height:27px;background:#c6c6c6"></div>
<div class="a" style="left:519px;top:2071px;width:1px;height:27px;background:#c6c6c6"></div>
<div class="a" style="left:689px;top:2071px;width:1px;height:27px;background:#c6c6c6"></div>
<div class="a" style="left:923px;top:2071px;width:1px;height:27px;background:#c6c6c6"></div>
<div class="a" style="left:1102px;top:2071px;width:1px;height:27px;background:#c6c6c6"></div>
<div class="a" style="left:1282px;top:2071px;width:1px;height:27px;background:#c6c6c6"></div>
<div class="a" style="left:3835px;top:189px;width:3px;height:1875px;background:#f0f0f0"></div>
<div class="a" style="left:3839px;top:35px;width:1px;height:183px;background:#c6c6c6"></div>
<div class="a" style="left:3838px;top:218px;width:2px;height:1846px;background:#6c6c6c"></div>
<svg class="a" style="left:0;top:0" width="3060" height="2064" viewBox="0 0 3060 2064">
<line x1="107" y1="1966.35" x2="3006" y2="1966.35" stroke="#c4c4c4" stroke-width="1.5"/>
<line x1="107" y1="1935.20" x2="3006" y2="1935.20" stroke="#c4c4c4" stroke-width="1.5"/>
<line x1="107" y1="1904.05" x2="3006" y2="1904.05" stroke="#c4c4c4" stroke-width="1.5"/>
<line x1="107" y1="1872.90" x2="3006" y2="1872.90" stroke="#c4c4c4" stroke-width="1.5"/>
<line x1="107" y1="1841.75" x2="3006" y2="1841.75" stroke="#c4c4c4" stroke-width="1.5"/>
<line x1="107" y1="1810.60" x2="3006" y2="1810.60" stroke="#c4c4c4" stroke-width="1.5"/>
<line x1="107" y1="1779.45" x2="3006" y2="1779.45" stroke="#c4c4c4" stroke-width="1.5"/>
<line x1="107" y1="1748.30" x2="3006" y2="1748.30" stroke="#c4c4c4" stroke-width="1.5"/>
<line x1="107" y1="1717.15" x2="3006" y2="1717.15" stroke="#c4c4c4" stroke-width="1.5"/>
<line x1="107" y1="1686.00" x2="3006" y2="1686.00" stroke="#c4c4c4" stroke-width="1.5"/>
<line x1="107" y1="1654.85" x2="3006" y2="1654.85" stroke="#c4c4c4" stroke-width="1.5"/>
<line x1="107" y1="1623.70" x2="3006" y2="1623.70" stroke="#c4c4c4" stroke-width="1.5"/>
<line x1="107" y1="1592.55" x2="3006" y2="1592.55" stroke="#c4c4c4" stroke-width="1.5"/>
<line x1="107" y1="1561.40" x2="3006" y2="1561.40" stroke="#c4c4c4" stroke-width="1.5"/>
<line x1="107" y1="1530.25" x2="3006" y2="1530.25" stroke="#c4c4c4" stroke-width="1.5"/>
<line x1="107" y1="1499.10" x2="3006" y2="1499.10" stroke="#c4c4c4" stroke-width="1.5"/>
<line x1="107" y1="1467.95" x2="3006" y2="1467.95" stroke="#c4c4c4" stroke-width="1.5"/>
<line x1="107" y1="1436.80" x2="3006" y2="1436.80" stroke="#c4c4c4" stroke-width="1.5"/>
<line x1="107" y1="1405.65" x2="3006" y2="1405.65" stroke="#c4c4c4" stroke-width="1.5"/>
<line x1="107" y1="1374.50" x2="3006" y2="1374.50" stroke="#c4c4c4" stroke-width="1.5"/>
<line x1="107" y1="1343.35" x2="3006" y2="1343.35" stroke="#c4c4c4" stroke-width="1.5"/>
<line x1="107" y1="1312.20" x2="3006" y2="1312.20" stroke="#c4c4c4" stroke-width="1.5"/>
<line x1="107" y1="1281.05" x2="3006" y2="1281.05" stroke="#c4c4c4" stroke-width="1.5"/>
<line x1="107" y1="1249.90" x2="3006" y2="1249.90" stroke="#c4c4c4" stroke-width="1.5"/>
<line x1="107" y1="1218.75" x2="3006" y2="1218.75" stroke="#c4c4c4" stroke-width="1.5"/>
<line x1="107" y1="1187.60" x2="3006" y2="1187.60" stroke="#c4c4c4" stroke-width="1.5"/>
<line x1="107" y1="1156.45" x2="3006" y2="1156.45" stroke="#c4c4c4" stroke-width="1.5"/>
<line x1="588.75" y1="1114" x2="588.75" y2="1997" stroke="#c4c4c4" stroke-width="1.5"/>
<line x1="1071.75" y1="1114" x2="1071.75" y2="1997" stroke="#c4c4c4" stroke-width="1.5"/>
<line x1="1554.75" y1="1114" x2="1554.75" y2="1997" stroke="#c4c4c4" stroke-width="1.5"/>
<line x1="2037.75" y1="1114" x2="2037.75" y2="1997" stroke="#c4c4c4" stroke-width="1.5"/>
<line x1="2520.75" y1="1114" x2="2520.75" y2="1997" stroke="#c4c4c4" stroke-width="1.5"/>
<path d="M107.3 1957.6 L133.8 1966.6 L159.5 1972.7 L186.2 1975.5 L212.3 1979.1 L240.6 1979.9 L265.1 1982.0 L293.5 1986.2 L315.9 1986.9 L345.6 1986.0 L372.5 1984.5 L394.6 1985.6 L417.1 1984.6 L441.1 1984.1 L466.8 1985.3 L495.5 1983.1 L522.6 1979.5 L549.9 1979.4 L574.2 1981.0 L604.1 1980.5 L631.8 1978.9 L655.6 1978.9 L678.2 1980.3 L703.4 1980.5 L728.5 1980.9 L757.3 1978.0 L780.9 1980.7 L806.7 1980.9 L831.9 1978.2 L858.9 1980.3 L883.1 1978.3 L907.7 1980.9 L935.8 1978.4 L959.8 1978.3 L982.2 1980.4 L1005.7 1979.7 L1031.2 1978.6 L1059.1 1978.4 L1086.2 1978.3 L1111.6 1978.6 L1135.8 1980.9 L1164.2 1978.9 L1193.3 1978.6 L1218.4 1980.6 L1245.6 1978.3 L1275.5 1978.6 L1299.5 1980.3 L1324.2 1978.9 L1346.8 1978.3 L1373.4 1978.7 L1400.2 1979.1 L1425.9 1980.9 L1451.7 1979.7 L1480.7 1978.5 L1503.9 1980.7 L1532.4 1978.7 L1556.0 1980.2 L1585.5 1978.6 L1615.1 1980.6 L1641.9 1979.3 L1664.7 1978.1 L1694.4 1978.7 L1722.1 1978.8 L1750.7 1979.8 L1775.0 1978.5 L1802.8 1978.2 L1826.6 1979.7 L1855.4 1979.8 L1879.7 1980.8 L1903.3 1978.0 L1927.5 1979.3 L1949.9 1978.5 L1974.9 1979.7 L1997.9 1979.1 L2027.1 1980.9 L2054.3 1980.1 L2081.0 1978.4 L2103.3 1978.1 L2132.6 1980.1 L2162.3 1978.1 L2189.4 1979.4 L2217.2 1979.0 L2247.2 1978.2 L2273.6 1980.2 L2302.8 1980.2 L2330.4 1980.4 L2359.7 1979.1 L2387.2 1980.7 L2416.2 1979.3 L2444.5 1980.6 L2471.1 1979.9 L2496.1 1979.7 L2523.0 1978.2 L2550.1 1981.0 L2579.2 1980.2 L2604.3 1980.2 L2630.9 1979.3 L2659.6 1978.3 L2687.6 1978.1 L2714.4 1979.4 L2738.3 1980.1 L2764.2 1979.8 L2793.6 1978.8 L2815.7 1978.9 L2843.1 1978.6 L2866.5 1980.7 L2893.8 1979.3 L2922.9 1979.0 L2950.2 1978.6 L2952.8 1979.5" stroke="#f02020" stroke-width="1.5" fill="none" stroke-linejoin="round"/>
<path d="M107.3 1937.3 L134.9 1945.4 L164.4 1951.5 L188.5 1958.5 L215.8 1964.0 L243.2 1970.9 L271.5 1972.9 L295.2 1975.7 L320.1 1974.8 L348.5 1976.6 L371.7 1977.2 L399.0 1977.0 L426.3 1977.7 L451.0 1978.4 L474.6 1981.5 L499.8 1982.3 L525.3 1979.3 L554.3 1979.5 L577.2 1979.2 L604.3 1978.2 L627.0 1980.0 L653.1 1978.2 L678.8 1978.3 L707.1 1979.0 L730.0 1979.8 L752.7 1978.4 L774.9 1979.6 L797.8 1979.1 L820.6 1978.9 L848.0 1979.1 L873.7 1979.0 L899.2 1979.2 L921.9 1978.9 L945.8 1980.0 L975.3 1977.9 L998.5 1979.5 L1025.1 1977.7 L1052.7 1980.2 L1078.1 1978.6 L1104.6 1980.1 L1128.7 1978.5 L1152.3 1979.3 L1178.0 1978.4 L1203.1 1977.8 L1227.6 1980.3 L1254.3 1978.4 L1283.8 1978.6 L1307.8 1977.8 L1331.0 1978.2 L1354.8 1980.0 L1378.9 1978.3 L1405.8 1980.1 L1430.1 1979.7 L1455.0 1979.2 L1481.8 1980.2 L1509.9 1979.0 L1538.6 1978.7 L1563.7 1980.2 L1590.0 1979.7 L1614.6 1980.1 L1641.5 1978.3 L1670.9 1978.9 L1695.6 1978.4 L1718.5 1978.2 L1746.0 1978.1 L1770.1 1978.9 L1796.4 1978.7 L1824.7 1978.4 L1849.7 1978.8 L1872.7 1978.3 L1895.9 1979.6 L1919.0 1979.4 L1942.8 1979.4 L1970.1 1978.6 L1999.5 1979.4 L2026.0 1977.8 L2051.2 1978.4 L2077.0 1980.1 L2105.9 1977.9 L2133.4 1980.1 L2159.7 1978.0 L2188.6 1978.8 L2218.5 1980.0 L2247.1 1980.1 L2269.6 1979.8 L2294.1 1978.1 L2319.1 1979.2 L2341.2 1978.9 L2369.4 1979.0 L2395.7 1978.5 L2425.4 1978.3 L2452.9 1979.4 L2474.9 1980.3 L2498.8 1980.3 L2528.2 1980.0 L2557.0 1978.7 L2582.6 1978.6 L2612.1 1977.8 L2635.2 1980.2 L2663.6 1979.5 L2693.4 1979.1 L2722.1 1978.9 L2751.3 1977.9 L2776.8 1979.2 L2805.1 1978.8 L2832.6 1980.2 L2857.9 1978.2 L2880.2 1979.9 L2906.0 1978.7 L2932.1 1978.0 L2940.2 1979.0" stroke="#a82424" stroke-width="1.5" fill="none" stroke-linejoin="round"/>
<path d="M107.3 1946.9 L198.0 1956.4 L213.3 1961.7 L227.4 1965.8 L246.8 1971.7 L268.8 1973.5 L285.5 1976.2 L301.8 1973.4 L317.6 1974.9 L338.6 1974.7 L354.4 1975.0 L372.5 1973.4 L390.1 1973.8 L404.8 1974.2 L421.6 1974.2 L443.1 1974.3 L460.3 1974.9 L482.3 1976.6 L503.9 1977.3 L519.0 1977.7 L540.5 1979.0 L560.2 1978.0 L578.2 1979.4 L593.0 1977.6 L607.4 1978.4 L628.1 1978.6 L645.3 1978.5 L660.7 1979.6 L677.6 1977.9 L694.1 1979.3 L710.6 1979.5 L727.3 1978.4 L741.9 1979.5 L762.3 1978.4 L777.2 1978.5 L794.2 1979.3 L815.6 1979.1 L831.9 1977.4 L853.1 1979.6 L868.3 1978.5 L886.2 1979.6 L900.5 1977.4 L921.3 1978.7 L939.0 1979.2 L957.7 1979.0 L973.8 1977.5 L987.8 1978.1 L1007.0 1978.2 L1023.8 1978.8 L1043.4 1978.7 L1059.9 1979.3 L1080.3 1979.4 L1101.5 1977.3 L1120.8 1978.1 L1137.9 1978.5 L1153.1 1977.9 L1175.0 1978.1 L1196.3 1978.9 L1212.8 1978.1 L1231.6 1979.0 L1248.4 1977.4 L1263.7 1979.4 L1283.6 1977.6 L1304.3 1978.7 L1320.9 1979.4 L1336.0 1977.5 L1352.7 1979.1 L1371.1 1978.5 L1392.4 1978.2 L1412.7 1977.3 L1432.9 1977.7 L1452.2 1979.3 L1471.4 1978.7 L1489.8 1979.1 L1506.8 1977.9 L1525.2 1978.5 L1540.1 1978.6 L1557.9 1977.7 L1577.5 1979.2 L1594.3 1979.4 L1616.2 1978.9 L1633.4 1978.0 L1648.5 1978.0 L1670.4 1977.4 L1691.8 1979.0 L1712.0 1977.5 L1731.2 1977.8 L1750.6 1979.2 L1770.4 1978.6 L1791.5 1977.9 L1806.7 1979.4 L1821.2 1978.3 L1838.5 1979.4 L1855.5 1978.7 L1873.5 1978.4 L1891.3 1978.4 L1910.1 1978.3 L1927.5 1979.5 L1949.3 1977.9 L1970.9 1977.4 L1987.5 1979.5 L2002.9 1978.9 L2024.8 1978.8 L2042.5 1977.4 L2060.1 1978.4 L2080.4 1978.2 L2100.9 1978.3 L2119.9 1979.1 L2135.3 1979.6 L2152.9 1978.5 L2174.7 1978.7 L2192.8 1977.8 L2208.6 1979.1 L2226.6 1978.9 L2246.2 1978.9 L2262.8 1979.4 L2280.4 1977.7 L2301.3 1979.5 L2316.3 1979.4 L2335.8 1977.9 L2354.4 1979.5 L2369.6 1978.9 L2385.5 1977.7 L2407.1 1979.7 L2413.7 1978.5 L2449.4 1903.4 L2594.0 1903.4" stroke="#2a86b8" stroke-width="1.5" fill="none" stroke-linejoin="round"/>
<path d="M107.3 1739.0 L506.0 1771.7 L852.6 1877.6 L1070.8 1903.4 L1187.3 1919.7 L1300.0 1929.8 L1447.5 1946.9 L1556.2 1948.4 L1610.6 1953.9 L1680.4 1960.8 L1723.3 1962.4 L1754.3 1958.5 L2146.6 1960.0 L2224.2 1959.3 L2270.8 1974.0 L2954.8 1975.0" stroke="#585858" stroke-width="1.5" fill="none" stroke-linejoin="round"/>
<path d="M107.3 1898.7 L199.4 1904.9 L387.3 1926.7 L409.0 1928.2 L500.0 1921.2 L569.9 1924.3 L611.8 1927.5 L678.6 1932.9 L717.4 1935.2 L748.4 1936.8 L900.0 1938.3 L996.3 1954.6 L1005.6 1955.4 L1100.0 1950.0 L1300.0 1954.6 L1338.8 1944.5 L1500.0 1945.0 L1735.7 1936.8 L1836.6 1936.8 L2146.6 1953.1 L2364.0 1947.6 L2500.0 1959.3 L2607.1 1962.9 L2678.6 1960.2 L2723.2 1953.9 L2767.9 1952.5 L2800.0 1952.5 L2853.6 1963.8 L2912.1 1965.5" stroke="#b07c28" stroke-width="1.5" fill="none" stroke-linejoin="round"/>
<path d="M107.3 1887.9 L193.2 1890.2 L270.8 1890.2 L426.0 1905.7 L500.0 1907.3 L588.5 1909.6 L670.8 1916.6 L732.9 1919.7 L826.0 1915.0 L841.6 1915.0 L900.0 1929.8 L965.2 1947.6 L1047.5 1939.1 L1117.4 1922.0 L1140.7 1921.2 L1226.0 1935.2 L1300.0 1942.2 L1439.8 1946.9 L1700.0 1941.4 L1749.7 1940.7 L1836.6 1960.0 L1855.3 1960.0 L2000.0 1938.0 L2208.7 1936.8 L2286.3 1950.7 L2410.6 1953.9 L2500.0 1960.8 L2621.4 1965.5 L2705.4 1967.9 L2908.9 1969.1 L2954.9 1969.1" stroke="#eeae58" stroke-width="1.5" fill="none" stroke-linejoin="round"/>
<path d="M107.3 1926.7 L216.5 1943.8 L298.8 1927.5 L395.0 1940.7 L454.0 1940.7 L500.0 1939.1 L538.8 1943.0 L593.2 1947.6 L616.5 1950.0 L663.0 1953.1 L725.2 1936.8 L740.7 1938.3 L826.1 1954.6 L880.4 1959.3 L962.1 1958.5 L1000.9 1955.4 L1058.4 1959.3 L1132.9 1942.2 L1210.6 1954.6 L1280.4 1958.5 L1300.0 1950.7 L1341.9 1925.9 L1447.5 1946.1 L1486.3 1946.1 L1571.7 1943.0 L1626.1 1940.7 L1700.0 1937.5 L1855.3 1936.8 L1948.4 1953.9 L2041.6 1962.4 L2100.0 1953.9 L2232.0 1957.7 L2286.3 1950.7 L2371.7 1948.4 L2433.9 1932.1 L2533.9 1932.1" stroke="#4444cc" stroke-width="1.5" fill="none" stroke-linejoin="round"/>
<path d="M107.3 1726.3 L213.0 1725.0 L424.0 1723.0 L525.8 1722.9 L960.5 1858.3 L1300.0 1925.1 L1486.3 1943.0 L1602.8 1950.7 L1700.0 1946.1 L1757.5 1958.5 L2100.0 1957.0 L2239.8 1960.8 L2325.2 1952.3 L2395.0 1970.9 L2433.9 1950.7 L2500.0 1960.2 L2567.9 1960.2 L2621.4 1933.4 L2720.8 1933.4" stroke="#c4e448" stroke-width="1.5" fill="none" stroke-linejoin="round"/>
<path d="M107.3 1964.7 L154.3 1975.6 L239.8 1974.0 L297.2 1963.2 L376.4 1960.0 L441.6 1962.4 L463.4 1962.4 L500.0 1953.1 L515.5 1948.4 L554.3 1946.1 L585.4 1943.8 L639.8 1942.2 L686.3 1940.7 L717.4 1936.8 L756.2 1935.2 L900.0 1937.5 L1055.3 1939.1 L1101.9 1943.0 L1132.9 1946.1 L1171.7 1942.2 L1300.0 1928.2 L1406.6 1777.4 L1745.0 1915.0 L1903.4 1915.0 L1967.1 1912.7 L2033.9 1914.3 L2100.0 1915.8 L2169.9 1912.7 L2255.3 1908.0 L2395.0 1906.5 L2500.0 1917.3 L2535.7 1921.8 L2651.8 1900.4 L2776.8 1903.9 L2942.8 1904.8" stroke="#2aa42a" stroke-width="1.5" fill="none" stroke-linejoin="round"/>
<path d="M107.3 1835.3 L535.7 1895.6 L619.6 1896.4 L776.4 1898.0 L857.1 1899.2 L900.0 1904.2 L1024.2 1918.1 L1132.9 1921.2 L1300.0 1925.1 L1369.9 1941.4 L1447.5 1927.5 L1548.4 1927.5 L1664.9 1918.1 L1700.0 1919.7 L1746.6 1922.8 L1863.0 1933.7 L2033.9 1934.4 L2100.0 1938.3 L2190.9 1553.9 L2876.5 1553.9" stroke="#a09438" stroke-width="1.5" fill="none" stroke-linejoin="round"/>
<path d="M107.3 1916.6 L138.8 1918.9 L379.5 1918.1 L500.0 1917.4 L652.2 1923.6 L686.3 1922.8 L709.6 1921.2 L732.9 1925.1 L818.3 1935.2 L847.8 1936.8 L985.4 1936.8 L1008.7 1936.8 L1103.8 1719.2 L1532.2 1577.8 L2180.4 1832.8 L2400.0 1854.0 L2428.4 1856.9 L2651.7 1856.9" stroke="#7c3c9c" stroke-width="1.5" fill="none" stroke-linejoin="round"/>
<path d="M107.3 1886.3 L151.2 1891.7 L255.3 1900.3 L387.3 1916.6 L410.6 1919.7 L460.0 1919.7 L509.3 1915.8 L531.0 1914.3 L593.2 1916.6 L655.3 1919.7 L672.4 1919.7 L791.0 1164.0 L2086.7 1817.2 L2250.6 1870.0 L2364.0 1905.7 L2400.0 1909.4 L2502.2 1922.7 L2619.2 1922.7" stroke="#a848e8" stroke-width="1.5" fill="none" stroke-linejoin="round"/>
<path d="M107.3 1939.1 L196.3 1924.3 L506.0 1798.0 L702.0 1790.0 L798.7 1787.3 L997.4 1794.4 L1200.0 1803.0 L1273.8 1805.8 L1347.6 1809.5 L1432.8 1811.5 L1569.0 1795.9 L1725.0 1778.8 L1800.0 1778.8 L1970.3 1774.6 L2069.7 1773.2 L2411.4 1822.8 L2682.1 1918.2 L2927.8 1916.8" stroke="#f028f0" stroke-width="1.5" fill="none" stroke-linejoin="round"/>
<path d="M107.3 1732.0 L516.0 1657.4 L1042.8 1844.1 L1300.0 1894.8 L1455.3 1922.8 L1548.4 1927.5 L1657.1 1938.3 L1839.8 1936.0 L1948.4 1947.6 L1948.4 1952.3 L2015.7 1680.3 L2505.3 1680.3" stroke="#2c2ca8" stroke-width="1.5" fill="none" stroke-linejoin="round"/>
<path d="M107.3 1767.5 L463.3 1844.7 L1134.0 1532.7 L1800.0 1658.2 L2364.9 1747.6 L2746.3 1864.5 L2952.0 1864.5" stroke="#88a028" stroke-width="1.5" fill="none" stroke-linejoin="round"/>
<path d="M107.3 1911.1 L509.8 1651.9 L1036.5 1581.1 L1685.1 1565.8 L2353.5 1760.4 L2723.2 1912.0 L2853.6 1936.4 L2948.9 1936.4" stroke="#22e022" stroke-width="1.5" fill="none" stroke-linejoin="round"/>
<path d="M107.3 1926.4 L392.4 1811.5 L673.8 1747.6 L1058.5 1187.5 L2311.0 1615.6 L2902.3 1615.6" stroke="#28eeee" stroke-width="1.5" fill="none" stroke-linejoin="round"/>
<path d="M107.3 1760.4 L469.7 1371.1 L1431.0 1307.0 L2512.7 1306.2" stroke="#2a9a80" stroke-width="1.5" fill="none" stroke-linejoin="round"/>
<path d="M99 1114.4H3003.8V1998H99M107.2 1114.4V2004.3M3003.8 1997V2004.3" stroke="#111" stroke-width="1.6" fill="none"/>
<line x1="99" y1="1997.50" x2="107" y2="1997.50" stroke="#111" stroke-width="1.6"/>
<line x1="99" y1="1966.35" x2="107" y2="1966.35" stroke="#111" stroke-width="1.6"/>
<line x1="99" y1="1935.20" x2="107" y2="1935.20" stroke="#111" stroke-width="1.6"/>
<line x1="99" y1="1904.05" x2="107" y2="1904.05" stroke="#111" stroke-width="1.6"/>
<line x1="99" y1="1872.90" x2="107" y2="1872.90" stroke="#111" stroke-width="1.6"/>
<line x1="99" y1="1841.75" x2="107" y2="1841.75" stroke="#111" stroke-width="1.6"/>
<line x1="99" y1="1810.60" x2="107" y2="1810.60" stroke="#111" stroke-width="1.6"/>
<line x1="99" y1="1779.45" x2="107" y2="1779.45" stroke="#111" stroke-width="1.6"/>
<line x1="99" y1="1748.30" x2="107" y2="1748.30" stroke="#111" stroke-width="1.6"/>
<line x1="99" y1="1717.15" x2="107" y2="1717.15" stroke="#111" stroke-width="1.6"/>
<line x1="99" y1="1686.00" x2="107" y2="1686.00" stroke="#111" stroke-width="1.6"/>
<line x1="99" y1="1654.85" x2="107" y2="1654.85" stroke="#111" stroke-width="1.6"/>
<line x1="99" y1="1623.70" x2="107" y2="1623.70" stroke="#111" stroke-width="1.6"/>
<line x1="99" y1="1592.55" x2="107" y2="1592.55" stroke="#111" stroke-width="1.6"/>
<line x1="99" y1="1561.40" x2="107" y2="1561.40" stroke="#111" stroke-width="1.6"/>
<line x1="99" y1="1530.25" x2="107" y2="1530.25" stroke="#111" stroke-width="1.6"/>
<line x1="99" y1="1499.10" x2="107" y2="1499.10" stroke="#111" stroke-width="1.6"/>
<line x1="99" y1="1467.95" x2="107" y2="1467.95" stroke="#111" stroke-width="1.6"/>
<line x1="99" y1="1436.80" x2="107" y2="1436.80" stroke="#111" stroke-width="1.6"/>
<line x1="99" y1="1405.65" x2="107" y2="1405.65" stroke="#111" stroke-width="1.6"/>
<line x1="99" y1="1374.50" x2="107" y2="1374.50" stroke="#111" stroke-width="1.6"/>
<line x1="99" y1="1343.35" x2="107" y2="1343.35" stroke="#111" stroke-width="1.6"/>
<line x1="99" y1="1312.20" x2="107" y2="1312.20" stroke="#111" stroke-width="1.6"/>
<line x1="99" y1="1281.05" x2="107" y2="1281.05" stroke="#111" stroke-width="1.6"/>
<line x1="99" y1="1249.90" x2="107" y2="1249.90" stroke="#111" stroke-width="1.6"/>
<line x1="99" y1="1218.75" x2="107" y2="1218.75" stroke="#111" stroke-width="1.6"/>
<line x1="99" y1="1187.60" x2="107" y2="1187.60" stroke="#111" stroke-width="1.6"/>
<line x1="99" y1="1156.45" x2="107" y2="1156.45" stroke="#111" stroke-width="1.6"/>
<line x1="588.75" y1="1997" x2="588.75" y2="2004.3" stroke="#111" stroke-width="1.6"/>
<line x1="1071.75" y1="1997" x2="1071.75" y2="2004.3" stroke="#111" stroke-width="1.6"/>
<line x1="1554.75" y1="1997" x2="1554.75" y2="2004.3" stroke="#111" stroke-width="1.6"/>
<line x1="2037.75" y1="1997" x2="2037.75" y2="2004.3" stroke="#111" stroke-width="1.6"/>
<line x1="2520.75" y1="1997" x2="2520.75" y2="2004.3" stroke="#111" stroke-width="1.6"/>
</svg>
</body></html>
